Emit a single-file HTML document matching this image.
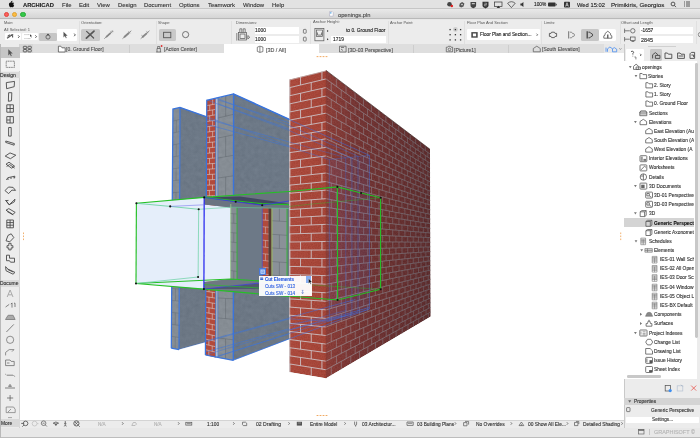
<!DOCTYPE html><html><head><meta charset="utf-8"><style>
*{margin:0;padding:0;box-sizing:border-box}
html,body{width:700px;height:438px;overflow:hidden;background:#fff;font-family:"Liberation Sans",sans-serif}
.t{position:absolute;white-space:nowrap;line-height:1.2;will-change:transform;-webkit-text-stroke:0.12px currentColor}
.b{position:absolute}
svg{position:absolute;left:0;top:0}
</style></head><body><div class="b" style="left:0.00px;top:0.00px;width:700.00px;height:438.00px;background:#e8e8e8"></div>
<div class="b" style="left:0.00px;top:436.60px;width:700.00px;height:1.40px;background:#bdbdbd"></div>
<div class="b" style="left:20.00px;top:53.00px;width:604.00px;height:366.50px;background:#ffffff"></div>
<div class="b" style="left:0.00px;top:0.00px;width:700.00px;height:9.40px;background:#e2e2e2;border-bottom:0.6px solid #c6c6c6"></div>
<div class="t" style="left:23.00px;top:1.70px;font-size:5.81px;color:#1a1a1a;font-weight:bold;-webkit-text-stroke:0.12px #1a1a1a;">ARCHICAD</div>
<div class="t" style="left:62.00px;top:1.61px;font-size:5.95px;color:#333;font-weight:normal;-webkit-text-stroke:0.12px #333;">File</div>
<div class="t" style="left:78.60px;top:1.61px;font-size:5.95px;color:#333;font-weight:normal;-webkit-text-stroke:0.12px #333;">Edit</div>
<div class="t" style="left:97.00px;top:1.61px;font-size:5.95px;color:#333;font-weight:normal;-webkit-text-stroke:0.12px #333;">View</div>
<div class="t" style="left:117.60px;top:1.61px;font-size:5.95px;color:#333;font-weight:normal;-webkit-text-stroke:0.12px #333;">Design</div>
<div class="t" style="left:143.80px;top:1.61px;font-size:5.95px;color:#333;font-weight:normal;-webkit-text-stroke:0.12px #333;">Document</div>
<div class="t" style="left:179.30px;top:1.61px;font-size:5.95px;color:#333;font-weight:normal;-webkit-text-stroke:0.12px #333;">Options</div>
<div class="t" style="left:208.00px;top:1.61px;font-size:5.95px;color:#333;font-weight:normal;-webkit-text-stroke:0.12px #333;">Teamwork</div>
<div class="t" style="left:243.00px;top:1.61px;font-size:5.95px;color:#333;font-weight:normal;-webkit-text-stroke:0.12px #333;">Window</div>
<div class="t" style="left:272.00px;top:1.61px;font-size:5.95px;color:#333;font-weight:normal;-webkit-text-stroke:0.12px #333;">Help</div>
<div class="t" style="left:533.60px;top:2.34px;font-size:4.77px;color:#222;font-weight:normal;-webkit-text-stroke:0.12px #222;">100%</div>
<div class="t" style="left:576.80px;top:1.70px;font-size:5.81px;color:#222;font-weight:normal;-webkit-text-stroke:0.12px #222;">Wed 15:02</div>
<div class="t" style="left:610.60px;top:1.48px;font-size:6.16px;color:#222;font-weight:normal;-webkit-text-stroke:0.12px #222;">Primikiris, Georgios</div>
<div class="b" style="left:0.00px;top:9.40px;width:700.00px;height:10.10px;background:linear-gradient(#e9e9e9,#d5d5d5);border-bottom:0.6px solid #b9b9b9"></div>
<div class="b" style="left:3.60px;top:11.60px;width:5.4px;height:5.4px;border-radius:50%;background:#fc605a;border:0.3px solid #e0443e"></div>
<div class="b" style="left:12.00px;top:11.60px;width:5.4px;height:5.4px;border-radius:50%;background:#fdbc40;border:0.3px solid #dea236"></div>
<div class="b" style="left:20.40px;top:11.60px;width:5.4px;height:5.4px;border-radius:50%;background:#34c84a;border:0.3px solid #27aa35"></div>
<div class="t" style="left:337.50px;top:11.65px;font-size:5.73px;color:#4a4a4a;font-weight:normal;-webkit-text-stroke:0.12px #4a4a4a;">openings.pln</div>
<div class="b" style="left:0.00px;top:19.50px;width:700.00px;height:24.90px;background:#ececec"></div>
<div class="b" style="left:79.30px;top:20.80px;width:0.60px;height:23.40px;background:#e0e0e0"></div>
<div class="b" style="left:156.20px;top:20.80px;width:0.60px;height:23.40px;background:#e0e0e0"></div>
<div class="b" style="left:231.00px;top:20.80px;width:0.60px;height:23.40px;background:#e0e0e0"></div>
<div class="b" style="left:309.80px;top:20.80px;width:0.60px;height:23.40px;background:#e0e0e0"></div>
<div class="b" style="left:387.80px;top:20.80px;width:0.60px;height:23.40px;background:#e0e0e0"></div>
<div class="b" style="left:464.20px;top:20.80px;width:0.60px;height:23.40px;background:#e0e0e0"></div>
<div class="b" style="left:541.00px;top:20.80px;width:0.60px;height:23.40px;background:#e0e0e0"></div>
<div class="b" style="left:620.20px;top:20.80px;width:0.60px;height:23.40px;background:#e0e0e0"></div>
<div class="b" style="left:695.90px;top:20.80px;width:0.60px;height:23.40px;background:#e0e0e0"></div>
<div class="t" style="left:4.30px;top:20.62px;font-size:3.84px;color:#555;font-weight:normal;-webkit-text-stroke:0.0px #555;">Main:</div>
<div class="t" style="left:4.30px;top:27.58px;font-size:4.07px;color:#5a5a5a;font-weight:normal;-webkit-text-stroke:0.0px #5a5a5a;">All Selected: 1</div>
<div class="t" style="left:81.40px;top:20.42px;font-size:4.16px;color:#555;font-weight:normal;-webkit-text-stroke:0.0px #555;">Orientation:</div>
<div class="t" style="left:158.40px;top:20.63px;font-size:3.82px;color:#555;font-weight:normal;-webkit-text-stroke:0.0px #555;">Shape:</div>
<div class="t" style="left:235.70px;top:20.61px;font-size:3.85px;color:#555;font-weight:normal;-webkit-text-stroke:0.0px #555;">Dimensions:</div>
<div class="t" style="left:312.60px;top:20.49px;font-size:4.05px;color:#555;font-weight:normal;-webkit-text-stroke:0.0px #555;">Anchor Height:</div>
<div class="t" style="left:390.00px;top:20.57px;font-size:3.91px;color:#555;font-weight:normal;-webkit-text-stroke:0.0px #555;">Anchor Point:</div>
<div class="t" style="left:467.00px;top:20.54px;font-size:3.97px;color:#555;font-weight:normal;-webkit-text-stroke:0.0px #555;">Floor Plan And Section:</div>
<div class="t" style="left:544.00px;top:20.55px;font-size:3.95px;color:#555;font-weight:normal;-webkit-text-stroke:0.0px #555;">Limits:</div>
<div class="t" style="left:621.00px;top:20.55px;font-size:3.96px;color:#555;font-weight:normal;-webkit-text-stroke:0.0px #555;">Offset and Length:</div>
<div class="b" style="left:5.10px;top:32.90px;width:15.50px;height:7.40px;background:#fff;border-radius:1px"></div>
<div class="b" style="left:22.30px;top:32.90px;width:16.00px;height:7.40px;background:#fff;border-radius:1px"></div>
<div class="b" style="left:39.40px;top:32.90px;width:17.20px;height:7.70px;background:#c6c6c6;border-radius:1.2px"></div>
<div class="b" style="left:57.10px;top:28.90px;width:20.00px;height:11.70px;background:#fff;border-radius:1px"></div>
<div class="b" style="left:81.40px;top:28.60px;width:18.30px;height:12.00px;background:#c9c9c9;border-radius:1.6px"></div>
<div class="b" style="left:158.70px;top:28.60px;width:17.70px;height:12.30px;background:#c9c9c9;border-radius:1.6px"></div>
<div class="b" style="left:254.60px;top:26.90px;width:44.50px;height:7.10px;background:#fff"></div>
<div class="b" style="left:254.60px;top:36.30px;width:44.50px;height:7.10px;background:#fff"></div>
<div class="t" style="left:255.40px;top:28.16px;font-size:4.90px;color:#222;font-weight:normal;-webkit-text-stroke:0.12px #222;">1000</div>
<div class="t" style="left:255.40px;top:36.96px;font-size:4.90px;color:#222;font-weight:normal;-webkit-text-stroke:0.12px #222;">1000</div>
<div class="t" style="left:346.30px;top:27.79px;font-size:4.86px;color:#222;font-weight:normal;-webkit-text-stroke:0.12px #222;">to 0. Ground Floor</div>
<div class="b" style="left:330.90px;top:35.70px;width:54.80px;height:7.70px;background:#fff"></div>
<div class="t" style="left:332.60px;top:36.86px;font-size:4.90px;color:#222;font-weight:normal;-webkit-text-stroke:0.12px #222;">1719</div>
<div class="b" style="left:467.40px;top:29.10px;width:72.40px;height:10.80px;background:#fff;border-radius:1px"></div>
<div class="t" style="left:479.80px;top:32.47px;font-size:4.72px;color:#222;font-weight:normal;-webkit-text-stroke:0.12px #222;">Floor Plan and Section...</div>
<div class="b" style="left:581.10px;top:28.60px;width:17.80px;height:12.30px;background:#c6c6c6;border-radius:1.6px"></div>
<div class="b" style="left:599.40px;top:28.60px;width:16.60px;height:12.30px;background:#fff;border-radius:1.6px"></div>
<div class="b" style="left:639.70px;top:27.30px;width:53.30px;height:6.70px;background:#fff"></div>
<div class="b" style="left:639.70px;top:35.70px;width:53.30px;height:7.00px;background:#fff"></div>
<div class="t" style="left:640.80px;top:28.32px;font-size:4.81px;color:#222;font-weight:normal;-webkit-text-stroke:0.12px #222;">-1657</div>
<div class="t" style="left:640.80px;top:36.56px;font-size:5.39px;color:#222;font-weight:normal;-webkit-text-stroke:0.12px #222;">2845</div>
<div class="b" style="left:20.00px;top:44.40px;width:583.50px;height:8.40px;background:#dedede"></div>
<div class="b" style="left:20.00px;top:44.40px;width:12.60px;height:8.40px;background:#d6d6d6"></div>
<div class="b" style="left:223.70px;top:44.40px;width:95.30px;height:8.80px;background:#ffffff"></div>
<div class="b" style="left:128.70px;top:45.00px;width:0.50px;height:7.60px;background:#cdcdcd"></div>
<div class="b" style="left:412.90px;top:45.00px;width:0.50px;height:7.60px;background:#cdcdcd"></div>
<div class="b" style="left:508.00px;top:45.00px;width:0.50px;height:7.60px;background:#cdcdcd"></div>
<div class="t" style="left:66.30px;top:47.11px;font-size:4.99px;color:#505050;font-weight:normal;-webkit-text-stroke:0.12px #505050;">[0. Ground Floor]</div>
<div class="t" style="left:164.30px;top:47.13px;font-size:4.96px;color:#505050;font-weight:normal;-webkit-text-stroke:0.12px #505050;">[Action Center]</div>
<div class="t" style="left:265.70px;top:46.87px;font-size:5.37px;color:#505050;font-weight:normal;-webkit-text-stroke:0.12px #505050;">[3D / All]</div>
<div class="t" style="left:347.70px;top:47.02px;font-size:5.12px;color:#505050;font-weight:normal;-webkit-text-stroke:0.12px #505050;">[3D-03 Perspective]</div>
<div class="t" style="left:454.00px;top:47.03px;font-size:5.11px;color:#505050;font-weight:normal;-webkit-text-stroke:0.12px #505050;">[Picture1]</div>
<div class="t" style="left:541.60px;top:47.11px;font-size:4.99px;color:#505050;font-weight:normal;-webkit-text-stroke:0.12px #505050;">[South Elevation]</div>
<div class="b" style="left:0.00px;top:44.40px;width:20.00px;height:383.20px;background:#ececec;border-right:0.6px solid #d2d2d2"></div>
<div class="b" style="left:0.00px;top:44.40px;width:1.00px;height:393.60px;background:#b9b9b9"></div>
<div class="b" style="left:1.00px;top:46.80px;width:18.70px;height:11.50px;background:#c6c6c6"></div>
<div class="b" style="left:1.00px;top:58.30px;width:18.70px;height:12.80px;background:#f2f2f2"></div>
<div class="b" style="left:1.00px;top:71.50px;width:18.70px;height:6.90px;background:#dadada"></div>
<div class="t" style="left:0.20px;top:72.41px;font-size:5.14px;color:#333;font-weight:normal;-webkit-text-stroke:0.12px #333;">Design</div>
<div class="b" style="left:1.00px;top:279.70px;width:18.70px;height:6.90px;background:#dadada"></div>
<div class="t" style="left:0.20px;top:280.84px;font-size:4.94px;color:#333;font-weight:normal;-webkit-text-stroke:0.12px #333;">Docume</div>
<div class="b" style="left:1.00px;top:418.90px;width:18.70px;height:8.50px;background:#d9d9d9"></div>
<div class="t" style="left:0.80px;top:420.85px;font-size:4.92px;color:#333;font-weight:normal;-webkit-text-stroke:0.12px #333;">More</div>
<div class="b" style="left:20.00px;top:419.50px;width:604.00px;height:8.10px;background:#ececec;border-top:0.5px solid #d4d4d4"></div>
<div class="t" style="left:98.30px;top:421.74px;font-size:4.62px;color:#b0b0b0;font-weight:normal;-webkit-text-stroke:0.12px #b0b0b0;">N/A</div>
<div class="t" style="left:154.30px;top:421.74px;font-size:4.62px;color:#b0b0b0;font-weight:normal;-webkit-text-stroke:0.12px #b0b0b0;">N/A</div>
<div class="t" style="left:206.90px;top:421.60px;font-size:4.84px;color:#333;font-weight:normal;-webkit-text-stroke:0.12px #333;">1:100</div>
<div class="t" style="left:256.00px;top:421.43px;font-size:5.11px;color:#333;font-weight:normal;-webkit-text-stroke:0.12px #333;">02 Drafting</div>
<div class="t" style="left:310.40px;top:421.57px;font-size:4.88px;color:#333;font-weight:normal;-webkit-text-stroke:0.12px #333;">Entire Model</div>
<div class="t" style="left:362.30px;top:421.57px;font-size:4.89px;color:#333;font-weight:normal;-webkit-text-stroke:0.12px #333;">03 Architectur...</div>
<div class="t" style="left:416.50px;top:421.62px;font-size:4.81px;color:#333;font-weight:normal;-webkit-text-stroke:0.12px #333;">03 Building Plans</div>
<div class="t" style="left:475.90px;top:421.57px;font-size:4.89px;color:#333;font-weight:normal;-webkit-text-stroke:0.12px #333;">No Overrides</div>
<div class="t" style="left:528.00px;top:421.57px;font-size:4.88px;color:#333;font-weight:normal;-webkit-text-stroke:0.12px #333;">00 Show All Ele...</div>
<div class="t" style="left:583.00px;top:421.59px;font-size:4.86px;color:#333;font-weight:normal;-webkit-text-stroke:0.12px #333;">Detailed Shading</div>
<div class="b" style="left:623.80px;top:44.40px;width:76.20px;height:383.20px;background:#ececec;border-left:0.6px solid #c9c9c9"></div>
<div class="b" style="left:648.00px;top:45.80px;width:28.40px;height:0.70px;background:#d0d0d0"></div>
<div class="b" style="left:625.70px;top:49.00px;width:17.90px;height:12.10px;background:#fff;border-radius:1px"></div>
<div class="b" style="left:650.00px;top:49.00px;width:12.10px;height:12.10px;background:#c7c7c7;border-radius:1.4px"></div>
<div class="b" style="left:624.40px;top:61.10px;width:73.00px;height:317.50px;background:#fff"></div>
<div class="b" style="left:695.40px;top:63.00px;width:2.80px;height:275.00px;background:#c8c8c8;border-radius:1.4px"></div>
<div class="b" style="left:626.50px;top:375.40px;width:34.50px;height:2.60px;background:#c8c8c8;border-radius:1.3px"></div>
<div class="b" style="left:624.40px;top:218.00px;width:69.60px;height:9.20px;background:#d4d4d4"></div>
<div class="t" style="left:642.3px;top:64.50px;font-size:4.85px;color:#333;font-weight:normal;width:51.7px;overflow:hidden">openings</div>
<div class="t" style="left:648.3px;top:73.60px;font-size:4.85px;color:#333;font-weight:normal;width:45.7px;overflow:hidden">Stories</div>
<div class="t" style="left:654.3px;top:82.80px;font-size:4.85px;color:#333;font-weight:normal;width:39.7px;overflow:hidden">2. Story</div>
<div class="t" style="left:654.3px;top:91.90px;font-size:4.85px;color:#333;font-weight:normal;width:39.7px;overflow:hidden">1. Story</div>
<div class="t" style="left:654.3px;top:101.10px;font-size:4.85px;color:#333;font-weight:normal;width:39.7px;overflow:hidden">0. Ground Floor</div>
<div class="t" style="left:648.6px;top:110.60px;font-size:4.85px;color:#333;font-weight:normal;width:45.4px;overflow:hidden">Sections</div>
<div class="t" style="left:648.6px;top:119.60px;font-size:4.85px;color:#333;font-weight:normal;width:45.4px;overflow:hidden">Elevations</div>
<div class="t" style="left:654.3px;top:128.60px;font-size:4.85px;color:#333;font-weight:normal;width:39.7px;overflow:hidden">East Elevation (Au</div>
<div class="t" style="left:654.3px;top:137.80px;font-size:4.85px;color:#333;font-weight:normal;width:39.7px;overflow:hidden">South Elevation (A</div>
<div class="t" style="left:654.3px;top:147.00px;font-size:4.85px;color:#333;font-weight:normal;width:39.7px;overflow:hidden">West Elevation (A</div>
<div class="t" style="left:648.6px;top:156.20px;font-size:4.85px;color:#333;font-weight:normal;width:45.4px;overflow:hidden">Interior Elevations</div>
<div class="t" style="left:648.6px;top:165.40px;font-size:4.85px;color:#333;font-weight:normal;width:45.4px;overflow:hidden">Worksheets</div>
<div class="t" style="left:648.6px;top:174.50px;font-size:4.85px;color:#333;font-weight:normal;width:45.4px;overflow:hidden">Details</div>
<div class="t" style="left:648.6px;top:183.60px;font-size:4.85px;color:#333;font-weight:normal;width:45.4px;overflow:hidden">3D Documents</div>
<div class="t" style="left:654.3px;top:192.60px;font-size:4.85px;color:#333;font-weight:normal;width:39.7px;overflow:hidden">3D-01 Perspective</div>
<div class="t" style="left:654.3px;top:201.80px;font-size:4.85px;color:#333;font-weight:normal;width:39.7px;overflow:hidden">3D-03 Perspective</div>
<div class="t" style="left:648.6px;top:210.90px;font-size:4.85px;color:#333;font-weight:normal;width:45.4px;overflow:hidden">3D</div>
<div class="t" style="left:654.3px;top:220.60px;font-size:4.85px;color:#111;font-weight:bold;width:39.7px;overflow:hidden">Generic Perspective</div>
<div class="t" style="left:654.3px;top:229.80px;font-size:4.85px;color:#333;font-weight:normal;width:39.7px;overflow:hidden">Generic Axonometry</div>
<div class="t" style="left:648.6px;top:238.80px;font-size:4.85px;color:#333;font-weight:normal;width:45.4px;overflow:hidden">Schedules</div>
<div class="t" style="left:654.3px;top:247.90px;font-size:4.85px;color:#333;font-weight:normal;width:39.7px;overflow:hidden">Elements</div>
<div class="t" style="left:660px;top:257.10px;font-size:4.85px;color:#333;font-weight:normal;width:34.0px;overflow:hidden">IES-01 Wall Schedule</div>
<div class="t" style="left:660px;top:266.20px;font-size:4.85px;color:#333;font-weight:normal;width:34.0px;overflow:hidden">IES-02 All Openings</div>
<div class="t" style="left:660px;top:275.40px;font-size:4.85px;color:#333;font-weight:normal;width:34.0px;overflow:hidden">IES-03 Door Schedule</div>
<div class="t" style="left:660px;top:284.90px;font-size:4.85px;color:#333;font-weight:normal;width:34.0px;overflow:hidden">IES-04 Window</div>
<div class="t" style="left:660px;top:293.90px;font-size:4.85px;color:#333;font-weight:normal;width:34.0px;overflow:hidden">IES-05 Object List</div>
<div class="t" style="left:660px;top:302.90px;font-size:4.85px;color:#333;font-weight:normal;width:34.0px;overflow:hidden">IES-BX Default</div>
<div class="t" style="left:654.3px;top:311.80px;font-size:4.85px;color:#333;font-weight:normal;width:39.7px;overflow:hidden">Components</div>
<div class="t" style="left:654.3px;top:320.90px;font-size:4.85px;color:#333;font-weight:normal;width:39.7px;overflow:hidden">Surfaces</div>
<div class="t" style="left:648.6px;top:330.50px;font-size:4.85px;color:#333;font-weight:normal;width:45.4px;overflow:hidden">Project Indexes</div>
<div class="t" style="left:654.3px;top:339.60px;font-size:4.85px;color:#333;font-weight:normal;width:39.7px;overflow:hidden">Change List</div>
<div class="t" style="left:654.3px;top:348.80px;font-size:4.85px;color:#333;font-weight:normal;width:39.7px;overflow:hidden">Drawing List</div>
<div class="t" style="left:654.3px;top:357.90px;font-size:4.85px;color:#333;font-weight:normal;width:39.7px;overflow:hidden">Issue History</div>
<div class="t" style="left:654.3px;top:367.00px;font-size:4.85px;color:#333;font-weight:normal;width:39.7px;overflow:hidden">Sheet Index</div>
<div class="b" style="left:624.40px;top:398.00px;width:75.60px;height:6.70px;background:#d4d4d4"></div>
<div class="t" style="left:634.30px;top:398.59px;font-size:4.85px;color:#333;font-weight:normal;-webkit-text-stroke:0.12px #333;">Properties</div>
<div class="t" style="left:650.70px;top:407.83px;font-size:4.80px;color:#333;font-weight:normal;-webkit-text-stroke:0.12px #333;">Generic Perspective</div>
<div class="b" style="left:626.40px;top:416.60px;width:72.50px;height:6.10px;background:#fff;border-radius:0.8px"></div>
<div class="t" style="left:651.80px;top:417.24px;font-size:4.77px;color:#333;font-weight:normal;-webkit-text-stroke:0.12px #333;">Settings...</div>
<div class="t" style="left:654.30px;top:429.20px;font-size:5.48px;color:#b4b4b4;font-weight:normal;-webkit-text-stroke:0.12px #b4b4b4;">GRAPHISOFT ©</div>
<div class="b" style="left:649.20px;top:429.00px;width:0.60px;height:6.00px;background:#c4c4c4"></div>
<svg width="700" height="438" style="z-index:2"><defs><linearGradient id="gside" x1="326" y1="0" x2="430" y2="0" gradientUnits="userSpaceOnUse"><stop offset="0" stop-color="#8c3e38"/><stop offset="0.3" stop-color="#743534"/><stop offset="1" stop-color="#5c2d2e"/></linearGradient><linearGradient id="gfront" x1="289" y1="0" x2="326" y2="0" gradientUnits="userSpaceOnUse"><stop offset="0" stop-color="#ab4a3d"/><stop offset="1" stop-color="#a44538"/></linearGradient><linearGradient id="gconc" x1="0" y1="90" x2="0" y2="360" gradientUnits="userSpaceOnUse"><stop offset="0" stop-color="#6d7987"/><stop offset="1" stop-color="#6c7784"/></linearGradient><linearGradient id="gmort" x1="326" y1="0" x2="430" y2="0" gradientUnits="userSpaceOnUse"><stop offset="0" stop-color="#a0949a"/><stop offset="1" stop-color="#6c656c"/></linearGradient><filter id="nz" primitiveUnits="userSpaceOnUse" color-interpolation-filters="sRGB"><feTurbulence type="fractalNoise" baseFrequency="0.22" numOctaves="3" seed="4" result="n"/><feColorMatrix in="n" type="matrix" values="0.33 0.33 0.33 0 0  0.33 0.33 0.33 0 0  0.33 0.33 0.33 0 0  0 0 0 0 1" result="g"/><feComposite in="SourceGraphic" in2="g" operator="arithmetic" k1="0" k2="1" k3="0.09" k4="-0.045" result="c"/><feComposite in="c" in2="SourceAlpha" operator="in"/></filter><filter id="nzb" primitiveUnits="userSpaceOnUse" color-interpolation-filters="sRGB"><feTurbulence type="fractalNoise" baseFrequency="0.7" numOctaves="2" seed="9" result="n"/><feColorMatrix in="n" type="matrix" values="0.33 0.33 0.33 0 0  0.33 0.33 0.33 0 0  0.33 0.33 0.33 0 0  0 0 0 0 1" result="g"/><feComposite in="SourceGraphic" in2="g" operator="arithmetic" k1="0" k2="1" k3="0.14" k4="-0.07" result="c"/><feComposite in="c" in2="SourceAlpha" operator="in"/></filter></defs><polygon points="180.00,107.30 290.00,146.00 290.00,318.90 179.00,349.60" fill="url(#gconc)" filter="url(#nz)"/><polygon points="172.90,109.10 180.00,107.30 179.00,349.60 171.30,348.20" fill="#868d94" filter="url(#nz)"/><line x1="172.82" y1="121.05" x2="179.95" y2="119.41" stroke="#60676e" stroke-width="0.4" /><line x1="172.74" y1="133.01" x2="179.90" y2="131.53" stroke="#60676e" stroke-width="0.4" /><line x1="172.66" y1="144.96" x2="179.85" y2="143.64" stroke="#60676e" stroke-width="0.4" /><line x1="172.58" y1="156.92" x2="179.80" y2="155.76" stroke="#60676e" stroke-width="0.4" /><line x1="172.50" y1="168.88" x2="179.75" y2="167.88" stroke="#60676e" stroke-width="0.4" /><line x1="172.42" y1="180.83" x2="179.70" y2="179.99" stroke="#60676e" stroke-width="0.4" /><line x1="172.34" y1="192.78" x2="179.65" y2="192.10" stroke="#60676e" stroke-width="0.4" /><line x1="172.26" y1="204.74" x2="179.60" y2="204.22" stroke="#60676e" stroke-width="0.4" /><line x1="172.18" y1="216.69" x2="179.55" y2="216.34" stroke="#60676e" stroke-width="0.4" /><line x1="172.10" y1="228.65" x2="179.50" y2="228.45" stroke="#60676e" stroke-width="0.4" /><line x1="172.02" y1="240.60" x2="179.45" y2="240.56" stroke="#60676e" stroke-width="0.4" /><line x1="171.94" y1="252.56" x2="179.40" y2="252.68" stroke="#60676e" stroke-width="0.4" /><line x1="171.86" y1="264.51" x2="179.35" y2="264.80" stroke="#60676e" stroke-width="0.4" /><line x1="171.78" y1="276.47" x2="179.30" y2="276.91" stroke="#60676e" stroke-width="0.4" /><line x1="171.70" y1="288.42" x2="179.25" y2="289.03" stroke="#60676e" stroke-width="0.4" /><line x1="171.62" y1="300.38" x2="179.20" y2="301.14" stroke="#60676e" stroke-width="0.4" /><line x1="171.54" y1="312.33" x2="179.15" y2="313.25" stroke="#60676e" stroke-width="0.4" /><line x1="171.46" y1="324.29" x2="179.10" y2="325.37" stroke="#60676e" stroke-width="0.4" /><line x1="171.38" y1="336.25" x2="179.05" y2="337.49" stroke="#60676e" stroke-width="0.4" /><line x1="176.38" y1="120.23" x2="176.32" y2="132.27" stroke="#60676e" stroke-width="0.4" /><line x1="176.25" y1="144.30" x2="176.19" y2="156.34" stroke="#60676e" stroke-width="0.4" /><line x1="176.12" y1="168.38" x2="176.06" y2="180.41" stroke="#60676e" stroke-width="0.4" /><line x1="176.00" y1="192.44" x2="175.93" y2="204.48" stroke="#60676e" stroke-width="0.4" /><line x1="175.87" y1="216.51" x2="175.80" y2="228.55" stroke="#60676e" stroke-width="0.4" /><line x1="175.73" y1="240.58" x2="175.67" y2="252.62" stroke="#60676e" stroke-width="0.4" /><line x1="175.60" y1="264.65" x2="175.54" y2="276.69" stroke="#60676e" stroke-width="0.4" /><line x1="175.47" y1="288.72" x2="175.41" y2="300.76" stroke="#60676e" stroke-width="0.4" /><line x1="175.34" y1="312.79" x2="175.28" y2="324.83" stroke="#60676e" stroke-width="0.4" /><line x1="175.22" y1="336.87" x2="175.15" y2="348.90" stroke="#60676e" stroke-width="0.4" /><polyline points="171.30,348.20 172.90,109.10 180.00,107.30 290.00,146.00" fill="none" stroke="#3a74dc" stroke-width="1.25" /><polyline points="171.30,348.20 179.00,349.60 179.00,349.60" fill="none" stroke="#3a74dc" stroke-width="1.25" /><line x1="180.00" y1="107.30" x2="179.00" y2="349.60" stroke="#3a74dc" stroke-width="1.2" /><polygon points="233.60,93.80 290.00,119.60 290.00,338.80 233.30,360.30" fill="url(#gconc)" filter="url(#nz)"/><polygon points="206.80,100.30 215.60,98.60 215.60,357.50 205.40,355.00" fill="#b24a3c" /><polygon points="215.60,98.60 216.20,98.50 216.20,357.60 215.60,357.50" fill="#7a848e" /><line x1="206.77" y1="105.61" x2="215.60" y2="103.99" stroke="#d8cfcc" stroke-width="0.6" /><line x1="206.74" y1="110.91" x2="215.60" y2="109.39" stroke="#d8cfcc" stroke-width="0.6" /><line x1="206.71" y1="116.22" x2="215.60" y2="114.78" stroke="#d8cfcc" stroke-width="0.6" /><line x1="206.68" y1="121.52" x2="215.60" y2="120.17" stroke="#d8cfcc" stroke-width="0.6" /><line x1="206.65" y1="126.83" x2="215.60" y2="125.57" stroke="#d8cfcc" stroke-width="0.6" /><line x1="206.62" y1="132.14" x2="215.60" y2="130.96" stroke="#d8cfcc" stroke-width="0.6" /><line x1="206.60" y1="137.44" x2="215.60" y2="136.36" stroke="#d8cfcc" stroke-width="0.6" /><line x1="206.57" y1="142.75" x2="215.60" y2="141.75" stroke="#d8cfcc" stroke-width="0.6" /><line x1="206.54" y1="148.06" x2="215.60" y2="147.14" stroke="#d8cfcc" stroke-width="0.6" /><line x1="206.51" y1="153.36" x2="215.60" y2="152.54" stroke="#d8cfcc" stroke-width="0.6" /><line x1="206.48" y1="158.67" x2="215.60" y2="157.93" stroke="#d8cfcc" stroke-width="0.6" /><line x1="206.45" y1="163.97" x2="215.60" y2="163.32" stroke="#d8cfcc" stroke-width="0.6" /><line x1="206.42" y1="169.28" x2="215.60" y2="168.72" stroke="#d8cfcc" stroke-width="0.6" /><line x1="206.39" y1="174.59" x2="215.60" y2="174.11" stroke="#d8cfcc" stroke-width="0.6" /><line x1="206.36" y1="179.89" x2="215.60" y2="179.51" stroke="#d8cfcc" stroke-width="0.6" /><line x1="206.33" y1="185.20" x2="215.60" y2="184.90" stroke="#d8cfcc" stroke-width="0.6" /><line x1="206.30" y1="190.51" x2="215.60" y2="190.29" stroke="#d8cfcc" stroke-width="0.6" /><line x1="206.28" y1="195.81" x2="215.60" y2="195.69" stroke="#d8cfcc" stroke-width="0.6" /><line x1="206.25" y1="201.12" x2="215.60" y2="201.08" stroke="#d8cfcc" stroke-width="0.6" /><line x1="206.22" y1="206.43" x2="215.60" y2="206.47" stroke="#d8cfcc" stroke-width="0.6" /><line x1="206.19" y1="211.73" x2="215.60" y2="211.87" stroke="#d8cfcc" stroke-width="0.6" /><line x1="206.16" y1="217.04" x2="215.60" y2="217.26" stroke="#d8cfcc" stroke-width="0.6" /><line x1="206.13" y1="222.34" x2="215.60" y2="222.66" stroke="#d8cfcc" stroke-width="0.6" /><line x1="206.10" y1="227.65" x2="215.60" y2="228.05" stroke="#d8cfcc" stroke-width="0.6" /><line x1="206.07" y1="232.96" x2="215.60" y2="233.44" stroke="#d8cfcc" stroke-width="0.6" /><line x1="206.04" y1="238.26" x2="215.60" y2="238.84" stroke="#d8cfcc" stroke-width="0.6" /><line x1="206.01" y1="243.57" x2="215.60" y2="244.23" stroke="#d8cfcc" stroke-width="0.6" /><line x1="205.98" y1="248.88" x2="215.60" y2="249.62" stroke="#d8cfcc" stroke-width="0.6" /><line x1="205.95" y1="254.18" x2="215.60" y2="255.02" stroke="#d8cfcc" stroke-width="0.6" /><line x1="205.93" y1="259.49" x2="215.60" y2="260.41" stroke="#d8cfcc" stroke-width="0.6" /><line x1="205.90" y1="264.79" x2="215.60" y2="265.81" stroke="#d8cfcc" stroke-width="0.6" /><line x1="205.87" y1="270.10" x2="215.60" y2="271.20" stroke="#d8cfcc" stroke-width="0.6" /><line x1="205.84" y1="275.41" x2="215.60" y2="276.59" stroke="#d8cfcc" stroke-width="0.6" /><line x1="205.81" y1="280.71" x2="215.60" y2="281.99" stroke="#d8cfcc" stroke-width="0.6" /><line x1="205.78" y1="286.02" x2="215.60" y2="287.38" stroke="#d8cfcc" stroke-width="0.6" /><line x1="205.75" y1="291.32" x2="215.60" y2="292.77" stroke="#d8cfcc" stroke-width="0.6" /><line x1="205.72" y1="296.63" x2="215.60" y2="298.17" stroke="#d8cfcc" stroke-width="0.6" /><line x1="205.69" y1="301.94" x2="215.60" y2="303.56" stroke="#d8cfcc" stroke-width="0.6" /><line x1="205.66" y1="307.24" x2="215.60" y2="308.96" stroke="#d8cfcc" stroke-width="0.6" /><line x1="205.63" y1="312.55" x2="215.60" y2="314.35" stroke="#d8cfcc" stroke-width="0.6" /><line x1="205.60" y1="317.86" x2="215.60" y2="319.74" stroke="#d8cfcc" stroke-width="0.6" /><line x1="205.58" y1="323.16" x2="215.60" y2="325.14" stroke="#d8cfcc" stroke-width="0.6" /><line x1="205.55" y1="328.47" x2="215.60" y2="330.53" stroke="#d8cfcc" stroke-width="0.6" /><line x1="205.52" y1="333.77" x2="215.60" y2="335.92" stroke="#d8cfcc" stroke-width="0.6" /><line x1="205.49" y1="339.08" x2="215.60" y2="341.32" stroke="#d8cfcc" stroke-width="0.6" /><line x1="205.46" y1="344.39" x2="215.60" y2="346.71" stroke="#d8cfcc" stroke-width="0.6" /><line x1="205.43" y1="349.69" x2="215.60" y2="352.11" stroke="#d8cfcc" stroke-width="0.6" /><line x1="212.67" y1="99.17" x2="212.66" y2="104.53" stroke="#d8cfcc" stroke-width="0.6" /><line x1="209.71" y1="105.07" x2="209.69" y2="110.40" stroke="#d8cfcc" stroke-width="0.6" /><line x1="212.65" y1="109.90" x2="212.64" y2="115.26" stroke="#d8cfcc" stroke-width="0.6" /><line x1="209.68" y1="115.74" x2="209.66" y2="121.07" stroke="#d8cfcc" stroke-width="0.6" /><line x1="212.63" y1="120.62" x2="212.62" y2="125.99" stroke="#d8cfcc" stroke-width="0.6" /><line x1="209.64" y1="126.41" x2="209.62" y2="131.75" stroke="#d8cfcc" stroke-width="0.6" /><line x1="212.61" y1="131.35" x2="212.60" y2="136.72" stroke="#d8cfcc" stroke-width="0.6" /><line x1="209.60" y1="137.08" x2="209.58" y2="142.42" stroke="#d8cfcc" stroke-width="0.6" /><line x1="212.59" y1="142.08" x2="212.58" y2="147.45" stroke="#d8cfcc" stroke-width="0.6" /><line x1="209.56" y1="147.75" x2="209.54" y2="153.09" stroke="#d8cfcc" stroke-width="0.6" /><line x1="212.57" y1="152.81" x2="212.56" y2="158.18" stroke="#d8cfcc" stroke-width="0.6" /><line x1="209.52" y1="158.42" x2="209.50" y2="163.76" stroke="#d8cfcc" stroke-width="0.6" /><line x1="212.55" y1="163.54" x2="212.54" y2="168.91" stroke="#d8cfcc" stroke-width="0.6" /><line x1="209.48" y1="169.09" x2="209.46" y2="174.43" stroke="#d8cfcc" stroke-width="0.6" /><line x1="212.53" y1="174.27" x2="212.52" y2="179.64" stroke="#d8cfcc" stroke-width="0.6" /><line x1="209.44" y1="179.76" x2="209.42" y2="185.10" stroke="#d8cfcc" stroke-width="0.6" /><line x1="212.51" y1="185.00" x2="212.50" y2="190.36" stroke="#d8cfcc" stroke-width="0.6" /><line x1="209.40" y1="190.44" x2="209.38" y2="195.77" stroke="#d8cfcc" stroke-width="0.6" /><line x1="212.49" y1="195.73" x2="212.48" y2="201.09" stroke="#d8cfcc" stroke-width="0.6" /><line x1="209.36" y1="201.11" x2="209.34" y2="206.44" stroke="#d8cfcc" stroke-width="0.6" /><line x1="212.47" y1="206.46" x2="212.46" y2="211.82" stroke="#d8cfcc" stroke-width="0.6" /><line x1="209.33" y1="211.78" x2="209.31" y2="217.11" stroke="#d8cfcc" stroke-width="0.6" /><line x1="212.45" y1="217.19" x2="212.44" y2="222.55" stroke="#d8cfcc" stroke-width="0.6" /><line x1="209.29" y1="222.45" x2="209.27" y2="227.78" stroke="#d8cfcc" stroke-width="0.6" /><line x1="212.43" y1="227.92" x2="212.42" y2="233.28" stroke="#d8cfcc" stroke-width="0.6" /><line x1="209.25" y1="233.12" x2="209.23" y2="238.45" stroke="#d8cfcc" stroke-width="0.6" /><line x1="212.41" y1="238.65" x2="212.40" y2="244.01" stroke="#d8cfcc" stroke-width="0.6" /><line x1="209.21" y1="243.79" x2="209.19" y2="249.12" stroke="#d8cfcc" stroke-width="0.6" /><line x1="212.39" y1="249.38" x2="212.38" y2="254.74" stroke="#d8cfcc" stroke-width="0.6" /><line x1="209.17" y1="254.46" x2="209.15" y2="259.80" stroke="#d8cfcc" stroke-width="0.6" /><line x1="212.38" y1="260.10" x2="212.37" y2="265.47" stroke="#d8cfcc" stroke-width="0.6" /><line x1="209.13" y1="265.13" x2="209.11" y2="270.47" stroke="#d8cfcc" stroke-width="0.6" /><line x1="212.36" y1="270.83" x2="212.35" y2="276.20" stroke="#d8cfcc" stroke-width="0.6" /><line x1="209.09" y1="275.80" x2="209.07" y2="281.14" stroke="#d8cfcc" stroke-width="0.6" /><line x1="212.34" y1="281.56" x2="212.33" y2="286.93" stroke="#d8cfcc" stroke-width="0.6" /><line x1="209.05" y1="286.47" x2="209.03" y2="291.81" stroke="#d8cfcc" stroke-width="0.6" /><line x1="212.32" y1="292.29" x2="212.31" y2="297.66" stroke="#d8cfcc" stroke-width="0.6" /><line x1="209.01" y1="297.14" x2="208.99" y2="302.48" stroke="#d8cfcc" stroke-width="0.6" /><line x1="212.30" y1="303.02" x2="212.29" y2="308.39" stroke="#d8cfcc" stroke-width="0.6" /><line x1="208.98" y1="307.81" x2="208.96" y2="313.15" stroke="#d8cfcc" stroke-width="0.6" /><line x1="212.28" y1="313.75" x2="212.27" y2="319.11" stroke="#d8cfcc" stroke-width="0.6" /><line x1="208.94" y1="318.49" x2="208.92" y2="323.82" stroke="#d8cfcc" stroke-width="0.6" /><line x1="212.26" y1="324.48" x2="212.25" y2="329.84" stroke="#d8cfcc" stroke-width="0.6" /><line x1="208.90" y1="329.16" x2="208.88" y2="334.49" stroke="#d8cfcc" stroke-width="0.6" /><line x1="212.24" y1="335.21" x2="212.23" y2="340.57" stroke="#d8cfcc" stroke-width="0.6" /><line x1="208.86" y1="339.83" x2="208.84" y2="345.16" stroke="#d8cfcc" stroke-width="0.6" /><line x1="212.22" y1="345.94" x2="212.21" y2="351.30" stroke="#d8cfcc" stroke-width="0.6" /><line x1="208.82" y1="350.50" x2="208.80" y2="355.83" stroke="#d8cfcc" stroke-width="0.6" /><polygon points="216.20,98.50 217.80,98.10 217.80,357.90 216.20,357.60" fill="#b8bcc2" /><polygon points="217.80,98.10 233.60,93.80 233.30,360.30 217.80,357.90" fill="#868d94" filter="url(#nz)"/><line x1="217.80" y1="118.08" x2="233.58" y2="114.30" stroke="#5c636a" stroke-width="0.45" /><line x1="217.80" y1="138.07" x2="233.55" y2="134.80" stroke="#5c636a" stroke-width="0.45" /><line x1="217.80" y1="158.05" x2="233.53" y2="155.30" stroke="#5c636a" stroke-width="0.45" /><line x1="217.80" y1="178.04" x2="233.51" y2="175.80" stroke="#5c636a" stroke-width="0.45" /><line x1="217.80" y1="198.02" x2="233.48" y2="196.30" stroke="#5c636a" stroke-width="0.45" /><line x1="217.80" y1="218.01" x2="233.46" y2="216.80" stroke="#5c636a" stroke-width="0.45" /><line x1="217.80" y1="237.99" x2="233.44" y2="237.30" stroke="#5c636a" stroke-width="0.45" /><line x1="217.80" y1="257.98" x2="233.42" y2="257.80" stroke="#5c636a" stroke-width="0.45" /><line x1="217.80" y1="277.96" x2="233.39" y2="278.30" stroke="#5c636a" stroke-width="0.45" /><line x1="217.80" y1="297.95" x2="233.37" y2="298.80" stroke="#5c636a" stroke-width="0.45" /><line x1="217.80" y1="317.93" x2="233.35" y2="319.30" stroke="#5c636a" stroke-width="0.45" /><line x1="217.80" y1="337.92" x2="233.32" y2="339.80" stroke="#5c636a" stroke-width="0.45" /><line x1="225.70" y1="95.95" x2="225.69" y2="116.19" stroke="#5c636a" stroke-width="0.45" /><line x1="225.68" y1="136.43" x2="225.67" y2="156.68" stroke="#5c636a" stroke-width="0.45" /><line x1="225.65" y1="176.92" x2="225.64" y2="197.16" stroke="#5c636a" stroke-width="0.45" /><line x1="225.63" y1="217.40" x2="225.62" y2="237.65" stroke="#5c636a" stroke-width="0.45" /><line x1="225.61" y1="257.89" x2="225.60" y2="278.13" stroke="#5c636a" stroke-width="0.45" /><line x1="225.58" y1="298.37" x2="225.57" y2="318.62" stroke="#5c636a" stroke-width="0.45" /><line x1="225.56" y1="338.86" x2="225.55" y2="359.10" stroke="#5c636a" stroke-width="0.45" /><polyline points="205.40,355.00 206.80,100.30 233.60,93.80 290.00,119.60" fill="none" stroke="#3a74dc" stroke-width="1.25" /><polyline points="205.40,355.00 233.30,360.30 233.30,360.30" fill="none" stroke="#3a74dc" stroke-width="1.25" /><line x1="233.60" y1="93.80" x2="233.30" y2="360.30" stroke="#3a74dc" stroke-width="1.4" /><line x1="215.60" y1="98.60" x2="215.60" y2="357.50" stroke="#3a74dc" stroke-width="0.6" /><line x1="217.80" y1="98.10" x2="217.80" y2="357.90" stroke="#3a74dc" stroke-width="0.6" /><line x1="218.40" y1="100.00" x2="290.00" y2="123.00" stroke="#3a74dc" stroke-width="0.6" opacity="0.85"/><line x1="218.40" y1="104.00" x2="290.00" y2="129.20" stroke="#3a74dc" stroke-width="0.6" opacity="0.85"/><line x1="205.40" y1="118.60" x2="290.00" y2="142.20" stroke="#3a74dc" stroke-width="0.6" opacity="0.85"/><line x1="205.40" y1="124.00" x2="290.00" y2="147.00" stroke="#3a74dc" stroke-width="0.6" opacity="0.85"/><line x1="205.70" y1="341.00" x2="290.00" y2="318.00" stroke="#3a74dc" stroke-width="0.6" opacity="0.85"/><line x1="205.40" y1="352.00" x2="290.00" y2="328.50" stroke="#3a74dc" stroke-width="0.6" opacity="0.85"/><line x1="218.40" y1="356.00" x2="290.00" y2="333.50" stroke="#3a74dc" stroke-width="0.6" opacity="0.85"/><polygon points="136.40,203.30 204.20,197.40 204.20,204.50 231.00,207.50 230.60,279.00 204.00,282.00 203.90,289.10 136.00,283.50" fill="#e5eefa" /><polygon points="230.50,204.00 237.00,204.44 237.00,281.11 230.50,280.00" fill="#868d94" /><polygon points="237.00,204.44 262.30,206.17 262.30,285.44 237.00,281.11" fill="#6d7987" /><polygon points="262.30,206.17 268.60,206.61 268.60,286.51 262.30,285.44" fill="#b04a3c" /><polygon points="268.60,206.61 271.60,206.81 271.60,287.03 268.60,286.51" fill="#5a3a34" /><polygon points="271.60,206.81 287.20,207.88 287.20,289.69 271.60,287.03" fill="#8a9198" /><polygon points="287.20,207.88 289.20,208.01 289.20,290.03 287.20,289.69" fill="#6d7987" /><line x1="262.30" y1="213.22" x2="268.60" y2="213.68" stroke="#d0c8c8" stroke-width="0.5" /><line x1="262.30" y1="219.95" x2="268.60" y2="220.45" stroke="#d0c8c8" stroke-width="0.5" /><line x1="262.30" y1="226.68" x2="268.60" y2="227.22" stroke="#d0c8c8" stroke-width="0.5" /><line x1="262.30" y1="233.40" x2="268.60" y2="234.00" stroke="#d0c8c8" stroke-width="0.5" /><line x1="262.30" y1="240.12" x2="268.60" y2="240.78" stroke="#d0c8c8" stroke-width="0.5" /><line x1="262.30" y1="246.85" x2="268.60" y2="247.55" stroke="#d0c8c8" stroke-width="0.5" /><line x1="262.30" y1="253.57" x2="268.60" y2="254.32" stroke="#d0c8c8" stroke-width="0.5" /><line x1="262.30" y1="260.30" x2="268.60" y2="261.10" stroke="#d0c8c8" stroke-width="0.5" /><line x1="262.30" y1="267.02" x2="268.60" y2="267.88" stroke="#d0c8c8" stroke-width="0.5" /><line x1="262.30" y1="273.75" x2="268.60" y2="274.65" stroke="#d0c8c8" stroke-width="0.5" /><line x1="262.30" y1="280.47" x2="268.60" y2="281.42" stroke="#d0c8c8" stroke-width="0.5" /><line x1="265.45" y1="213.45" x2="265.45" y2="220.20" stroke="#d0c8c8" stroke-width="0.5" /><line x1="265.45" y1="226.95" x2="265.45" y2="233.70" stroke="#d0c8c8" stroke-width="0.5" /><line x1="265.45" y1="240.45" x2="265.45" y2="247.20" stroke="#d0c8c8" stroke-width="0.5" /><line x1="265.45" y1="253.95" x2="265.45" y2="260.70" stroke="#d0c8c8" stroke-width="0.5" /><line x1="265.45" y1="267.45" x2="265.45" y2="274.20" stroke="#d0c8c8" stroke-width="0.5" /><line x1="265.45" y1="280.95" x2="265.45" y2="287.70" stroke="#d0c8c8" stroke-width="0.5" /><line x1="271.60" y1="220.70" x2="287.20" y2="221.67" stroke="#60676e" stroke-width="0.5" /><line x1="271.60" y1="234.30" x2="287.20" y2="235.33" stroke="#60676e" stroke-width="0.5" /><line x1="271.60" y1="247.90" x2="287.20" y2="249.00" stroke="#60676e" stroke-width="0.5" /><line x1="271.60" y1="261.50" x2="287.20" y2="262.67" stroke="#60676e" stroke-width="0.5" /><line x1="271.60" y1="275.10" x2="287.20" y2="276.33" stroke="#60676e" stroke-width="0.5" /><line x1="279.40" y1="207.55" x2="279.40" y2="221.18" stroke="#60676e" stroke-width="0.5" /><line x1="279.40" y1="234.82" x2="279.40" y2="248.45" stroke="#60676e" stroke-width="0.5" /><line x1="279.40" y1="262.08" x2="279.40" y2="275.72" stroke="#60676e" stroke-width="0.5" /><line x1="230.50" y1="213.50" x2="237.00" y2="213.97" stroke="#60676e" stroke-width="0.45" /><line x1="230.50" y1="223.00" x2="237.00" y2="223.55" stroke="#60676e" stroke-width="0.45" /><line x1="230.50" y1="232.50" x2="237.00" y2="233.12" stroke="#60676e" stroke-width="0.45" /><line x1="230.50" y1="242.00" x2="237.00" y2="242.70" stroke="#60676e" stroke-width="0.45" /><line x1="230.50" y1="251.50" x2="237.00" y2="252.28" stroke="#60676e" stroke-width="0.45" /><line x1="230.50" y1="261.00" x2="237.00" y2="261.85" stroke="#60676e" stroke-width="0.45" /><line x1="230.50" y1="270.50" x2="237.00" y2="271.43" stroke="#60676e" stroke-width="0.45" /><line x1="233.75" y1="213.74" x2="233.75" y2="223.27" stroke="#60676e" stroke-width="0.45" /><line x1="233.75" y1="232.81" x2="233.75" y2="242.35" stroke="#60676e" stroke-width="0.45" /><line x1="233.75" y1="251.89" x2="233.75" y2="261.43" stroke="#60676e" stroke-width="0.45" /><line x1="233.75" y1="270.96" x2="233.75" y2="280.50" stroke="#60676e" stroke-width="0.45" /><line x1="237.00" y1="204.00" x2="237.00" y2="290.00" stroke="#26c026" stroke-width="0.8" /><line x1="287.00" y1="204.00" x2="287.00" y2="290.00" stroke="#26c026" stroke-width="0.8" /><line x1="272.00" y1="204.00" x2="272.00" y2="290.00" stroke="#a8c840" stroke-width="0.7" /><line x1="262.30" y1="205.00" x2="262.30" y2="290.00" stroke="#4b50d0" stroke-width="0.7" /><polygon points="204.20,197.40 289.00,191.50 289.00,208.50 231.00,207.50 204.20,204.50" fill="#6b7480" /><polygon points="204.20,197.40 240.00,196.50 289.00,203.50 262.20,205.20 235.70,201.80" fill="#3a3f5c" opacity="0.85"/><polygon points="204.00,282.00 230.60,279.00 289.00,283.00 289.00,296.50 203.90,289.10" fill="#6f7882" /><polygon points="203.90,289.10 258.00,283.50 289.00,286.50 289.00,290.00 250.00,289.00" fill="#3d4560" opacity="0.6"/><polyline points="136.40,203.30 204.20,197.40 289.00,191.50" fill="none" stroke="#26c026" stroke-width="1.15" /><polyline points="136.40,203.30 170.20,206.40 198.70,209.30" fill="none" stroke="#5fd09a" stroke-width="0.8" /><polyline points="198.70,209.30 231.00,207.20 289.00,208.50" fill="none" stroke="#5fd09a" stroke-width="0.6" /><polyline points="204.20,197.40 262.00,203.60 289.00,204.60" fill="none" stroke="#26c026" stroke-width="1.15" /><line x1="136.40" y1="203.30" x2="136.00" y2="283.50" stroke="#26c026" stroke-width="1.15" /><line x1="198.70" y1="209.30" x2="198.10" y2="277.00" stroke="#66d0a0" stroke-width="0.7" /><line x1="230.80" y1="204.00" x2="230.60" y2="279.00" stroke="#9cd68c" stroke-width="0.7" /><polyline points="136.00,283.50 230.60,279.00 289.00,283.00" fill="none" stroke="#26c026" stroke-width="1.15" /><polyline points="136.00,283.50 203.90,289.10 289.00,296.50" fill="none" stroke="#26c026" stroke-width="1.15" /><polyline points="136.00,283.50 198.10,277.00" fill="none" stroke="#66d0a0" stroke-width="0.7" /><line x1="204.20" y1="197.40" x2="203.90" y2="289.10" stroke="#2f2ff0" stroke-width="1.3" /><polyline points="204.20,197.40 235.70,201.80 262.20,205.20 289.00,201.00" fill="none" stroke="#3a3ae8" stroke-width="0.8" /><polyline points="170.20,206.40 204.20,204.80" fill="none" stroke="#7a7af0" stroke-width="0.6" /><polyline points="203.90,289.10 258.00,283.20 289.00,286.50" fill="none" stroke="#3a3ae8" stroke-width="0.7" /><polyline points="204.00,284.60 289.00,289.80" fill="none" stroke="#26c026" stroke-width="0.7" /><polygon points="289.20,79.60 326.00,70.40 326.00,378.30 289.20,372.00" fill="url(#gfront)" filter="url(#nzb)"/><line x1="289.20" y1="87.72" x2="326.00" y2="78.95" stroke="#cdc8cc" stroke-width="0.85" /><line x1="289.20" y1="95.84" x2="326.00" y2="87.51" stroke="#cdc8cc" stroke-width="0.85" /><line x1="289.20" y1="103.97" x2="326.00" y2="96.06" stroke="#cdc8cc" stroke-width="0.85" /><line x1="289.20" y1="112.09" x2="326.00" y2="104.61" stroke="#cdc8cc" stroke-width="0.85" /><line x1="289.20" y1="120.21" x2="326.00" y2="113.16" stroke="#cdc8cc" stroke-width="0.85" /><line x1="289.20" y1="128.33" x2="326.00" y2="121.72" stroke="#cdc8cc" stroke-width="0.85" /><line x1="289.20" y1="136.46" x2="326.00" y2="130.27" stroke="#cdc8cc" stroke-width="0.85" /><line x1="289.20" y1="144.58" x2="326.00" y2="138.82" stroke="#cdc8cc" stroke-width="0.85" /><line x1="289.20" y1="152.70" x2="326.00" y2="147.38" stroke="#cdc8cc" stroke-width="0.85" /><line x1="289.20" y1="160.82" x2="326.00" y2="155.93" stroke="#cdc8cc" stroke-width="0.85" /><line x1="289.20" y1="168.94" x2="326.00" y2="164.48" stroke="#cdc8cc" stroke-width="0.85" /><line x1="289.20" y1="177.07" x2="326.00" y2="173.03" stroke="#cdc8cc" stroke-width="0.85" /><line x1="289.20" y1="185.19" x2="326.00" y2="181.59" stroke="#cdc8cc" stroke-width="0.85" /><line x1="289.20" y1="193.31" x2="326.00" y2="190.14" stroke="#cdc8cc" stroke-width="0.85" /><line x1="289.20" y1="201.43" x2="326.00" y2="198.69" stroke="#cdc8cc" stroke-width="0.85" /><line x1="289.20" y1="209.56" x2="326.00" y2="207.24" stroke="#cdc8cc" stroke-width="0.85" /><line x1="289.20" y1="217.68" x2="326.00" y2="215.80" stroke="#cdc8cc" stroke-width="0.85" /><line x1="289.20" y1="225.80" x2="326.00" y2="224.35" stroke="#cdc8cc" stroke-width="0.85" /><line x1="289.20" y1="233.92" x2="326.00" y2="232.90" stroke="#cdc8cc" stroke-width="0.85" /><line x1="289.20" y1="242.04" x2="326.00" y2="241.46" stroke="#cdc8cc" stroke-width="0.85" /><line x1="289.20" y1="250.17" x2="326.00" y2="250.01" stroke="#cdc8cc" stroke-width="0.85" /><line x1="289.20" y1="258.29" x2="326.00" y2="258.56" stroke="#cdc8cc" stroke-width="0.85" /><line x1="289.20" y1="266.41" x2="326.00" y2="267.11" stroke="#cdc8cc" stroke-width="0.85" /><line x1="289.20" y1="274.53" x2="326.00" y2="275.67" stroke="#cdc8cc" stroke-width="0.85" /><line x1="289.20" y1="282.66" x2="326.00" y2="284.22" stroke="#cdc8cc" stroke-width="0.85" /><line x1="289.20" y1="290.78" x2="326.00" y2="292.77" stroke="#cdc8cc" stroke-width="0.85" /><line x1="289.20" y1="298.90" x2="326.00" y2="301.32" stroke="#cdc8cc" stroke-width="0.85" /><line x1="289.20" y1="307.02" x2="326.00" y2="309.88" stroke="#cdc8cc" stroke-width="0.85" /><line x1="289.20" y1="315.14" x2="326.00" y2="318.43" stroke="#cdc8cc" stroke-width="0.85" /><line x1="289.20" y1="323.27" x2="326.00" y2="326.98" stroke="#cdc8cc" stroke-width="0.85" /><line x1="289.20" y1="331.39" x2="326.00" y2="335.54" stroke="#cdc8cc" stroke-width="0.85" /><line x1="289.20" y1="339.51" x2="326.00" y2="344.09" stroke="#cdc8cc" stroke-width="0.85" /><line x1="289.20" y1="347.63" x2="326.00" y2="352.64" stroke="#cdc8cc" stroke-width="0.85" /><line x1="289.20" y1="355.76" x2="326.00" y2="361.19" stroke="#cdc8cc" stroke-width="0.85" /><line x1="289.20" y1="363.88" x2="326.00" y2="369.75" stroke="#cdc8cc" stroke-width="0.85" /><line x1="300.54" y1="76.77" x2="300.54" y2="85.02" stroke="#cdc8cc" stroke-width="0.85" /><line x1="321.93" y1="71.42" x2="321.93" y2="79.92" stroke="#cdc8cc" stroke-width="0.85" /><line x1="289.84" y1="87.57" x2="289.84" y2="95.70" stroke="#cdc8cc" stroke-width="0.85" /><line x1="311.24" y1="82.47" x2="311.24" y2="90.85" stroke="#cdc8cc" stroke-width="0.85" /><line x1="300.54" y1="93.27" x2="300.54" y2="101.53" stroke="#cdc8cc" stroke-width="0.85" /><line x1="321.93" y1="88.43" x2="321.93" y2="96.93" stroke="#cdc8cc" stroke-width="0.85" /><line x1="289.84" y1="103.83" x2="289.84" y2="111.96" stroke="#cdc8cc" stroke-width="0.85" /><line x1="311.24" y1="99.23" x2="311.24" y2="107.61" stroke="#cdc8cc" stroke-width="0.85" /><line x1="300.54" y1="109.78" x2="300.54" y2="118.04" stroke="#cdc8cc" stroke-width="0.85" /><line x1="321.93" y1="105.44" x2="321.93" y2="113.94" stroke="#cdc8cc" stroke-width="0.85" /><line x1="289.84" y1="120.09" x2="289.84" y2="128.22" stroke="#cdc8cc" stroke-width="0.85" /><line x1="311.24" y1="115.99" x2="311.24" y2="124.37" stroke="#cdc8cc" stroke-width="0.85" /><line x1="300.54" y1="126.29" x2="300.54" y2="134.55" stroke="#cdc8cc" stroke-width="0.85" /><line x1="321.93" y1="122.45" x2="321.93" y2="130.95" stroke="#cdc8cc" stroke-width="0.85" /><line x1="289.84" y1="136.35" x2="289.84" y2="144.48" stroke="#cdc8cc" stroke-width="0.85" /><line x1="311.24" y1="132.75" x2="311.24" y2="141.13" stroke="#cdc8cc" stroke-width="0.85" /><line x1="300.54" y1="142.80" x2="300.54" y2="151.06" stroke="#cdc8cc" stroke-width="0.85" /><line x1="321.93" y1="139.46" x2="321.93" y2="147.96" stroke="#cdc8cc" stroke-width="0.85" /><line x1="289.84" y1="152.61" x2="289.84" y2="160.74" stroke="#cdc8cc" stroke-width="0.85" /><line x1="311.24" y1="149.51" x2="311.24" y2="157.89" stroke="#cdc8cc" stroke-width="0.85" /><line x1="300.54" y1="159.31" x2="300.54" y2="167.57" stroke="#cdc8cc" stroke-width="0.85" /><line x1="321.93" y1="156.47" x2="321.93" y2="164.97" stroke="#cdc8cc" stroke-width="0.85" /><line x1="289.84" y1="168.87" x2="289.84" y2="177.00" stroke="#cdc8cc" stroke-width="0.85" /><line x1="311.24" y1="166.27" x2="311.24" y2="174.65" stroke="#cdc8cc" stroke-width="0.85" /><line x1="300.54" y1="175.82" x2="300.54" y2="184.08" stroke="#cdc8cc" stroke-width="0.85" /><line x1="321.93" y1="173.48" x2="321.93" y2="181.98" stroke="#cdc8cc" stroke-width="0.85" /><line x1="289.84" y1="185.13" x2="289.84" y2="193.26" stroke="#cdc8cc" stroke-width="0.85" /><line x1="311.24" y1="183.03" x2="311.24" y2="191.41" stroke="#cdc8cc" stroke-width="0.85" /><line x1="300.54" y1="192.33" x2="300.54" y2="200.59" stroke="#cdc8cc" stroke-width="0.85" /><line x1="321.93" y1="190.49" x2="321.93" y2="198.99" stroke="#cdc8cc" stroke-width="0.85" /><line x1="289.84" y1="201.39" x2="289.84" y2="209.52" stroke="#cdc8cc" stroke-width="0.85" /><line x1="311.24" y1="199.79" x2="311.24" y2="208.17" stroke="#cdc8cc" stroke-width="0.85" /><line x1="300.54" y1="208.84" x2="300.54" y2="217.10" stroke="#cdc8cc" stroke-width="0.85" /><line x1="321.93" y1="207.50" x2="321.93" y2="216.00" stroke="#cdc8cc" stroke-width="0.85" /><line x1="289.84" y1="217.64" x2="289.84" y2="225.77" stroke="#cdc8cc" stroke-width="0.85" /><line x1="311.24" y1="216.55" x2="311.24" y2="224.93" stroke="#cdc8cc" stroke-width="0.85" /><line x1="300.54" y1="225.35" x2="300.54" y2="233.61" stroke="#cdc8cc" stroke-width="0.85" /><line x1="321.93" y1="224.51" x2="321.93" y2="233.02" stroke="#cdc8cc" stroke-width="0.85" /><line x1="289.84" y1="233.90" x2="289.84" y2="242.03" stroke="#cdc8cc" stroke-width="0.85" /><line x1="311.24" y1="233.31" x2="311.24" y2="241.69" stroke="#cdc8cc" stroke-width="0.85" /><line x1="300.54" y1="241.86" x2="300.54" y2="250.12" stroke="#cdc8cc" stroke-width="0.85" /><line x1="321.93" y1="241.52" x2="321.93" y2="250.03" stroke="#cdc8cc" stroke-width="0.85" /><line x1="289.84" y1="250.16" x2="289.84" y2="258.29" stroke="#cdc8cc" stroke-width="0.85" /><line x1="311.24" y1="250.07" x2="311.24" y2="258.45" stroke="#cdc8cc" stroke-width="0.85" /><line x1="300.54" y1="258.37" x2="300.54" y2="266.63" stroke="#cdc8cc" stroke-width="0.85" /><line x1="321.93" y1="258.53" x2="321.93" y2="267.04" stroke="#cdc8cc" stroke-width="0.85" /><line x1="289.84" y1="266.42" x2="289.84" y2="274.55" stroke="#cdc8cc" stroke-width="0.85" /><line x1="311.24" y1="266.83" x2="311.24" y2="275.21" stroke="#cdc8cc" stroke-width="0.85" /><line x1="300.54" y1="274.88" x2="300.54" y2="283.14" stroke="#cdc8cc" stroke-width="0.85" /><line x1="321.93" y1="275.54" x2="321.93" y2="284.05" stroke="#cdc8cc" stroke-width="0.85" /><line x1="289.84" y1="282.68" x2="289.84" y2="290.81" stroke="#cdc8cc" stroke-width="0.85" /><line x1="311.24" y1="283.59" x2="311.24" y2="291.97" stroke="#cdc8cc" stroke-width="0.85" /><line x1="300.54" y1="291.39" x2="300.54" y2="299.65" stroke="#cdc8cc" stroke-width="0.85" /><line x1="321.93" y1="292.55" x2="321.93" y2="301.06" stroke="#cdc8cc" stroke-width="0.85" /><line x1="289.84" y1="298.94" x2="289.84" y2="307.07" stroke="#cdc8cc" stroke-width="0.85" /><line x1="311.24" y1="300.35" x2="311.24" y2="308.73" stroke="#cdc8cc" stroke-width="0.85" /><line x1="300.54" y1="307.90" x2="300.54" y2="316.16" stroke="#cdc8cc" stroke-width="0.85" /><line x1="321.93" y1="309.56" x2="321.93" y2="318.07" stroke="#cdc8cc" stroke-width="0.85" /><line x1="289.84" y1="315.20" x2="289.84" y2="323.33" stroke="#cdc8cc" stroke-width="0.85" /><line x1="311.24" y1="317.11" x2="311.24" y2="325.49" stroke="#cdc8cc" stroke-width="0.85" /><line x1="300.54" y1="324.41" x2="300.54" y2="332.67" stroke="#cdc8cc" stroke-width="0.85" /><line x1="321.93" y1="326.57" x2="321.93" y2="335.08" stroke="#cdc8cc" stroke-width="0.85" /><line x1="289.84" y1="331.46" x2="289.84" y2="339.59" stroke="#cdc8cc" stroke-width="0.85" /><line x1="311.24" y1="333.87" x2="311.24" y2="342.25" stroke="#cdc8cc" stroke-width="0.85" /><line x1="300.54" y1="340.92" x2="300.54" y2="349.18" stroke="#cdc8cc" stroke-width="0.85" /><line x1="321.93" y1="343.58" x2="321.93" y2="352.09" stroke="#cdc8cc" stroke-width="0.85" /><line x1="289.84" y1="347.72" x2="289.84" y2="355.85" stroke="#cdc8cc" stroke-width="0.85" /><line x1="311.24" y1="350.63" x2="311.24" y2="359.01" stroke="#cdc8cc" stroke-width="0.85" /><line x1="300.54" y1="357.43" x2="300.54" y2="365.69" stroke="#cdc8cc" stroke-width="0.85" /><line x1="321.93" y1="360.59" x2="321.93" y2="369.10" stroke="#cdc8cc" stroke-width="0.85" /><line x1="289.84" y1="363.98" x2="289.84" y2="372.11" stroke="#cdc8cc" stroke-width="0.85" /><line x1="311.24" y1="367.39" x2="311.24" y2="375.77" stroke="#cdc8cc" stroke-width="0.85" /><line x1="289.70" y1="79.60" x2="289.70" y2="372.00" stroke="#d2ccce" stroke-width="0.8" /><line x1="289.20" y1="80.10" x2="326.00" y2="70.90" stroke="#c9c1c1" stroke-width="0.7" /><polygon points="326.00,70.40 430.00,149.30 430.70,316.60 326.00,378.30" fill="url(#gside)" filter="url(#nzb)"/><line x1="326.00" y1="78.95" x2="430.02" y2="153.95" stroke="url(#gmort)" stroke-width="0.7" /><line x1="326.00" y1="87.51" x2="430.04" y2="158.59" stroke="url(#gmort)" stroke-width="0.7" /><line x1="326.00" y1="96.06" x2="430.06" y2="163.24" stroke="url(#gmort)" stroke-width="0.7" /><line x1="326.00" y1="104.61" x2="430.08" y2="167.89" stroke="url(#gmort)" stroke-width="0.7" /><line x1="326.00" y1="113.16" x2="430.10" y2="172.54" stroke="url(#gmort)" stroke-width="0.7" /><line x1="326.00" y1="121.72" x2="430.12" y2="177.18" stroke="url(#gmort)" stroke-width="0.7" /><line x1="326.00" y1="130.27" x2="430.14" y2="181.83" stroke="url(#gmort)" stroke-width="0.7" /><line x1="326.00" y1="138.82" x2="430.16" y2="186.48" stroke="url(#gmort)" stroke-width="0.7" /><line x1="326.00" y1="147.38" x2="430.18" y2="191.12" stroke="url(#gmort)" stroke-width="0.7" /><line x1="326.00" y1="155.93" x2="430.19" y2="195.77" stroke="url(#gmort)" stroke-width="0.7" /><line x1="326.00" y1="164.48" x2="430.21" y2="200.42" stroke="url(#gmort)" stroke-width="0.7" /><line x1="326.00" y1="173.03" x2="430.23" y2="205.07" stroke="url(#gmort)" stroke-width="0.7" /><line x1="326.00" y1="181.59" x2="430.25" y2="209.71" stroke="url(#gmort)" stroke-width="0.7" /><line x1="326.00" y1="190.14" x2="430.27" y2="214.36" stroke="url(#gmort)" stroke-width="0.7" /><line x1="326.00" y1="198.69" x2="430.29" y2="219.01" stroke="url(#gmort)" stroke-width="0.7" /><line x1="326.00" y1="207.24" x2="430.31" y2="223.66" stroke="url(#gmort)" stroke-width="0.7" /><line x1="326.00" y1="215.80" x2="430.33" y2="228.30" stroke="url(#gmort)" stroke-width="0.7" /><line x1="326.00" y1="224.35" x2="430.35" y2="232.95" stroke="url(#gmort)" stroke-width="0.7" /><line x1="326.00" y1="232.90" x2="430.37" y2="237.60" stroke="url(#gmort)" stroke-width="0.7" /><line x1="326.00" y1="241.46" x2="430.39" y2="242.24" stroke="url(#gmort)" stroke-width="0.7" /><line x1="326.00" y1="250.01" x2="430.41" y2="246.89" stroke="url(#gmort)" stroke-width="0.7" /><line x1="326.00" y1="258.56" x2="430.43" y2="251.54" stroke="url(#gmort)" stroke-width="0.7" /><line x1="326.00" y1="267.11" x2="430.45" y2="256.19" stroke="url(#gmort)" stroke-width="0.7" /><line x1="326.00" y1="275.67" x2="430.47" y2="260.83" stroke="url(#gmort)" stroke-width="0.7" /><line x1="326.00" y1="284.22" x2="430.49" y2="265.48" stroke="url(#gmort)" stroke-width="0.7" /><line x1="326.00" y1="292.77" x2="430.51" y2="270.13" stroke="url(#gmort)" stroke-width="0.7" /><line x1="326.00" y1="301.32" x2="430.52" y2="274.78" stroke="url(#gmort)" stroke-width="0.7" /><line x1="326.00" y1="309.88" x2="430.54" y2="279.42" stroke="url(#gmort)" stroke-width="0.7" /><line x1="326.00" y1="318.43" x2="430.56" y2="284.07" stroke="url(#gmort)" stroke-width="0.7" /><line x1="326.00" y1="326.98" x2="430.58" y2="288.72" stroke="url(#gmort)" stroke-width="0.7" /><line x1="326.00" y1="335.54" x2="430.60" y2="293.36" stroke="url(#gmort)" stroke-width="0.7" /><line x1="326.00" y1="344.09" x2="430.62" y2="298.01" stroke="url(#gmort)" stroke-width="0.7" /><line x1="326.00" y1="352.64" x2="430.64" y2="302.66" stroke="url(#gmort)" stroke-width="0.7" /><line x1="326.00" y1="361.19" x2="430.66" y2="307.31" stroke="url(#gmort)" stroke-width="0.7" /><line x1="326.00" y1="369.75" x2="430.68" y2="311.95" stroke="url(#gmort)" stroke-width="0.7" /><line x1="336.37" y1="78.26" x2="336.37" y2="86.43" stroke="url(#gmort)" stroke-width="0.55" /><line x1="346.02" y1="85.59" x2="346.03" y2="93.39" stroke="url(#gmort)" stroke-width="0.55" /><line x1="355.05" y1="92.44" x2="355.05" y2="99.90" stroke="url(#gmort)" stroke-width="0.55" /><line x1="363.49" y1="98.84" x2="363.50" y2="105.99" stroke="url(#gmort)" stroke-width="0.55" /><line x1="371.41" y1="104.85" x2="371.42" y2="111.70" stroke="url(#gmort)" stroke-width="0.55" /><line x1="378.85" y1="110.50" x2="378.86" y2="117.06" stroke="url(#gmort)" stroke-width="0.55" /><line x1="385.86" y1="115.81" x2="385.87" y2="122.12" stroke="url(#gmort)" stroke-width="0.55" /><line x1="392.47" y1="120.83" x2="392.49" y2="126.89" stroke="url(#gmort)" stroke-width="0.55" /><line x1="398.72" y1="125.57" x2="398.74" y2="131.39" stroke="url(#gmort)" stroke-width="0.55" /><line x1="404.63" y1="130.06" x2="404.65" y2="135.66" stroke="url(#gmort)" stroke-width="0.55" /><line x1="410.24" y1="134.31" x2="410.25" y2="139.70" stroke="url(#gmort)" stroke-width="0.55" /><line x1="415.56" y1="138.34" x2="415.57" y2="143.53" stroke="url(#gmort)" stroke-width="0.55" /><line x1="420.61" y1="142.18" x2="420.63" y2="147.18" stroke="url(#gmort)" stroke-width="0.55" /><line x1="425.42" y1="145.82" x2="425.44" y2="150.64" stroke="url(#gmort)" stroke-width="0.55" /><line x1="331.28" y1="82.76" x2="331.28" y2="91.11" stroke="url(#gmort)" stroke-width="0.55" /><line x1="341.28" y1="89.97" x2="341.29" y2="97.95" stroke="url(#gmort)" stroke-width="0.55" /><line x1="350.62" y1="96.70" x2="350.62" y2="104.33" stroke="url(#gmort)" stroke-width="0.55" /><line x1="359.34" y1="102.99" x2="359.35" y2="110.29" stroke="url(#gmort)" stroke-width="0.55" /><line x1="367.52" y1="108.89" x2="367.53" y2="115.88" stroke="url(#gmort)" stroke-width="0.55" /><line x1="375.20" y1="114.42" x2="375.21" y2="121.13" stroke="url(#gmort)" stroke-width="0.55" /><line x1="382.42" y1="119.63" x2="382.43" y2="126.06" stroke="url(#gmort)" stroke-width="0.55" /><line x1="389.23" y1="124.54" x2="389.24" y2="130.72" stroke="url(#gmort)" stroke-width="0.55" /><line x1="395.65" y1="129.17" x2="395.67" y2="135.11" stroke="url(#gmort)" stroke-width="0.55" /><line x1="401.73" y1="133.55" x2="401.75" y2="139.26" stroke="url(#gmort)" stroke-width="0.55" /><line x1="407.49" y1="137.70" x2="407.50" y2="143.20" stroke="url(#gmort)" stroke-width="0.55" /><line x1="412.95" y1="141.64" x2="412.96" y2="146.93" stroke="url(#gmort)" stroke-width="0.55" /><line x1="418.13" y1="145.38" x2="418.15" y2="150.47" stroke="url(#gmort)" stroke-width="0.55" /><line x1="423.06" y1="148.93" x2="423.08" y2="153.84" stroke="url(#gmort)" stroke-width="0.55" /><line x1="427.76" y1="152.32" x2="427.77" y2="157.05" stroke="url(#gmort)" stroke-width="0.55" /><line x1="336.37" y1="94.59" x2="336.37" y2="102.76" stroke="url(#gmort)" stroke-width="0.55" /><line x1="346.03" y1="101.19" x2="346.04" y2="108.99" stroke="url(#gmort)" stroke-width="0.55" /><line x1="355.06" y1="107.36" x2="355.06" y2="114.82" stroke="url(#gmort)" stroke-width="0.55" /><line x1="363.50" y1="113.13" x2="363.51" y2="120.28" stroke="url(#gmort)" stroke-width="0.55" /><line x1="371.43" y1="118.54" x2="371.43" y2="125.39" stroke="url(#gmort)" stroke-width="0.55" /><line x1="378.87" y1="123.63" x2="378.88" y2="130.20" stroke="url(#gmort)" stroke-width="0.55" /><line x1="385.88" y1="128.42" x2="385.90" y2="134.73" stroke="url(#gmort)" stroke-width="0.55" /><line x1="392.50" y1="132.94" x2="392.51" y2="139.00" stroke="url(#gmort)" stroke-width="0.55" /><line x1="398.75" y1="137.21" x2="398.76" y2="143.04" stroke="url(#gmort)" stroke-width="0.55" /><line x1="404.66" y1="141.26" x2="404.68" y2="146.86" stroke="url(#gmort)" stroke-width="0.55" /><line x1="410.27" y1="145.09" x2="410.28" y2="150.48" stroke="url(#gmort)" stroke-width="0.55" /><line x1="415.59" y1="148.72" x2="415.61" y2="153.91" stroke="url(#gmort)" stroke-width="0.55" /><line x1="420.64" y1="152.18" x2="420.66" y2="157.18" stroke="url(#gmort)" stroke-width="0.55" /><line x1="425.46" y1="155.46" x2="425.47" y2="160.28" stroke="url(#gmort)" stroke-width="0.55" /><line x1="331.28" y1="99.47" x2="331.28" y2="107.82" stroke="url(#gmort)" stroke-width="0.55" /><line x1="341.29" y1="105.93" x2="341.29" y2="113.91" stroke="url(#gmort)" stroke-width="0.55" /><line x1="350.62" y1="111.96" x2="350.63" y2="119.59" stroke="url(#gmort)" stroke-width="0.55" /><line x1="359.35" y1="117.59" x2="359.36" y2="124.89" stroke="url(#gmort)" stroke-width="0.55" /><line x1="367.53" y1="122.87" x2="367.54" y2="129.87" stroke="url(#gmort)" stroke-width="0.55" /><line x1="375.21" y1="127.83" x2="375.22" y2="134.54" stroke="url(#gmort)" stroke-width="0.55" /><line x1="382.44" y1="132.50" x2="382.45" y2="138.93" stroke="url(#gmort)" stroke-width="0.55" /><line x1="389.25" y1="136.90" x2="389.26" y2="143.07" stroke="url(#gmort)" stroke-width="0.55" /><line x1="395.68" y1="141.05" x2="395.69" y2="146.98" stroke="url(#gmort)" stroke-width="0.55" /><line x1="401.76" y1="144.97" x2="401.77" y2="150.68" stroke="url(#gmort)" stroke-width="0.55" /><line x1="407.52" y1="148.69" x2="407.53" y2="154.18" stroke="url(#gmort)" stroke-width="0.55" /><line x1="412.98" y1="152.22" x2="413.00" y2="157.50" stroke="url(#gmort)" stroke-width="0.55" /><line x1="418.17" y1="155.56" x2="418.18" y2="160.66" stroke="url(#gmort)" stroke-width="0.55" /><line x1="423.10" y1="158.75" x2="423.12" y2="163.66" stroke="url(#gmort)" stroke-width="0.55" /><line x1="427.79" y1="161.78" x2="427.81" y2="166.51" stroke="url(#gmort)" stroke-width="0.55" /><line x1="336.37" y1="110.92" x2="336.38" y2="119.08" stroke="url(#gmort)" stroke-width="0.55" /><line x1="346.04" y1="116.80" x2="346.04" y2="124.60" stroke="url(#gmort)" stroke-width="0.55" /><line x1="355.07" y1="122.28" x2="355.07" y2="129.75" stroke="url(#gmort)" stroke-width="0.55" /><line x1="363.52" y1="127.42" x2="363.52" y2="134.57" stroke="url(#gmort)" stroke-width="0.55" /><line x1="371.44" y1="132.24" x2="371.45" y2="139.09" stroke="url(#gmort)" stroke-width="0.55" /><line x1="378.89" y1="136.77" x2="378.90" y2="143.34" stroke="url(#gmort)" stroke-width="0.55" /><line x1="385.91" y1="141.03" x2="385.92" y2="147.34" stroke="url(#gmort)" stroke-width="0.55" /><line x1="392.52" y1="145.06" x2="392.54" y2="151.11" stroke="url(#gmort)" stroke-width="0.55" /><line x1="398.78" y1="148.86" x2="398.79" y2="154.68" stroke="url(#gmort)" stroke-width="0.55" /><line x1="404.69" y1="152.46" x2="404.71" y2="158.06" stroke="url(#gmort)" stroke-width="0.55" /><line x1="410.30" y1="155.86" x2="410.32" y2="161.25" stroke="url(#gmort)" stroke-width="0.55" /><line x1="415.62" y1="159.10" x2="415.64" y2="164.29" stroke="url(#gmort)" stroke-width="0.55" /><line x1="420.68" y1="162.18" x2="420.70" y2="167.18" stroke="url(#gmort)" stroke-width="0.55" /><line x1="425.49" y1="165.10" x2="425.51" y2="169.92" stroke="url(#gmort)" stroke-width="0.55" /><line x1="331.28" y1="116.18" x2="331.28" y2="124.53" stroke="url(#gmort)" stroke-width="0.55" /><line x1="341.29" y1="121.89" x2="341.30" y2="129.87" stroke="url(#gmort)" stroke-width="0.55" /><line x1="350.63" y1="127.21" x2="350.64" y2="134.84" stroke="url(#gmort)" stroke-width="0.55" /><line x1="359.37" y1="132.19" x2="359.37" y2="139.50" stroke="url(#gmort)" stroke-width="0.55" /><line x1="367.55" y1="136.86" x2="367.56" y2="143.86" stroke="url(#gmort)" stroke-width="0.55" /><line x1="375.23" y1="141.24" x2="375.24" y2="147.95" stroke="url(#gmort)" stroke-width="0.55" /><line x1="382.46" y1="145.37" x2="382.47" y2="151.80" stroke="url(#gmort)" stroke-width="0.55" /><line x1="389.27" y1="149.25" x2="389.29" y2="155.43" stroke="url(#gmort)" stroke-width="0.55" /><line x1="395.71" y1="152.92" x2="395.72" y2="158.86" stroke="url(#gmort)" stroke-width="0.55" /><line x1="401.79" y1="156.39" x2="401.80" y2="162.10" stroke="url(#gmort)" stroke-width="0.55" /><line x1="407.55" y1="159.68" x2="407.56" y2="165.17" stroke="url(#gmort)" stroke-width="0.55" /><line x1="413.01" y1="162.79" x2="413.03" y2="168.08" stroke="url(#gmort)" stroke-width="0.55" /><line x1="418.20" y1="165.75" x2="418.22" y2="170.84" stroke="url(#gmort)" stroke-width="0.55" /><line x1="423.13" y1="168.56" x2="423.15" y2="173.47" stroke="url(#gmort)" stroke-width="0.55" /><line x1="427.83" y1="171.24" x2="427.85" y2="175.98" stroke="url(#gmort)" stroke-width="0.55" /><line x1="336.38" y1="127.25" x2="336.38" y2="135.41" stroke="url(#gmort)" stroke-width="0.55" /><line x1="346.05" y1="132.40" x2="346.05" y2="140.20" stroke="url(#gmort)" stroke-width="0.55" /><line x1="355.08" y1="137.21" x2="355.08" y2="144.67" stroke="url(#gmort)" stroke-width="0.55" /><line x1="363.53" y1="141.71" x2="363.54" y2="148.86" stroke="url(#gmort)" stroke-width="0.55" /><line x1="371.46" y1="145.93" x2="371.47" y2="152.78" stroke="url(#gmort)" stroke-width="0.55" /><line x1="378.91" y1="149.90" x2="378.92" y2="156.47" stroke="url(#gmort)" stroke-width="0.55" /><line x1="385.93" y1="153.64" x2="385.94" y2="159.95" stroke="url(#gmort)" stroke-width="0.55" /><line x1="392.55" y1="157.17" x2="392.56" y2="163.23" stroke="url(#gmort)" stroke-width="0.55" /><line x1="398.80" y1="160.50" x2="398.82" y2="166.32" stroke="url(#gmort)" stroke-width="0.55" /><line x1="404.72" y1="163.65" x2="404.74" y2="169.25" stroke="url(#gmort)" stroke-width="0.55" /><line x1="410.33" y1="166.64" x2="410.35" y2="172.03" stroke="url(#gmort)" stroke-width="0.55" /><line x1="415.66" y1="169.48" x2="415.67" y2="174.67" stroke="url(#gmort)" stroke-width="0.55" /><line x1="420.72" y1="172.18" x2="420.73" y2="177.17" stroke="url(#gmort)" stroke-width="0.55" /><line x1="425.53" y1="174.74" x2="425.55" y2="179.56" stroke="url(#gmort)" stroke-width="0.55" /><line x1="331.28" y1="132.89" x2="331.28" y2="141.24" stroke="url(#gmort)" stroke-width="0.55" /><line x1="341.30" y1="137.84" x2="341.30" y2="145.82" stroke="url(#gmort)" stroke-width="0.55" /><line x1="350.64" y1="142.47" x2="350.65" y2="150.10" stroke="url(#gmort)" stroke-width="0.55" /><line x1="359.38" y1="146.80" x2="359.39" y2="154.10" stroke="url(#gmort)" stroke-width="0.55" /><line x1="367.57" y1="150.85" x2="367.57" y2="157.84" stroke="url(#gmort)" stroke-width="0.55" /><line x1="375.25" y1="154.66" x2="375.26" y2="161.36" stroke="url(#gmort)" stroke-width="0.55" /><line x1="382.48" y1="158.24" x2="382.49" y2="164.67" stroke="url(#gmort)" stroke-width="0.55" /><line x1="389.30" y1="161.61" x2="389.31" y2="167.79" stroke="url(#gmort)" stroke-width="0.55" /><line x1="395.73" y1="164.80" x2="395.75" y2="170.73" stroke="url(#gmort)" stroke-width="0.55" /><line x1="401.82" y1="167.81" x2="401.83" y2="173.52" stroke="url(#gmort)" stroke-width="0.55" /><line x1="407.58" y1="170.66" x2="407.59" y2="176.16" stroke="url(#gmort)" stroke-width="0.55" /><line x1="413.04" y1="173.37" x2="413.06" y2="178.66" stroke="url(#gmort)" stroke-width="0.55" /><line x1="418.23" y1="175.94" x2="418.25" y2="181.03" stroke="url(#gmort)" stroke-width="0.55" /><line x1="423.17" y1="178.38" x2="423.19" y2="183.29" stroke="url(#gmort)" stroke-width="0.55" /><line x1="427.87" y1="180.71" x2="427.89" y2="185.44" stroke="url(#gmort)" stroke-width="0.55" /><line x1="336.38" y1="143.57" x2="336.38" y2="151.74" stroke="url(#gmort)" stroke-width="0.55" /><line x1="346.05" y1="148.00" x2="346.06" y2="155.80" stroke="url(#gmort)" stroke-width="0.55" /><line x1="355.09" y1="152.13" x2="355.09" y2="159.59" stroke="url(#gmort)" stroke-width="0.55" /><line x1="363.54" y1="156.00" x2="363.55" y2="163.15" stroke="url(#gmort)" stroke-width="0.55" /><line x1="371.48" y1="159.63" x2="371.48" y2="166.48" stroke="url(#gmort)" stroke-width="0.55" /><line x1="378.93" y1="163.04" x2="378.94" y2="169.61" stroke="url(#gmort)" stroke-width="0.55" /><line x1="385.95" y1="166.25" x2="385.96" y2="172.56" stroke="url(#gmort)" stroke-width="0.55" /><line x1="392.57" y1="169.28" x2="392.59" y2="175.34" stroke="url(#gmort)" stroke-width="0.55" /><line x1="398.83" y1="172.15" x2="398.84" y2="177.97" stroke="url(#gmort)" stroke-width="0.55" /><line x1="404.75" y1="174.85" x2="404.77" y2="180.45" stroke="url(#gmort)" stroke-width="0.55" /><line x1="410.36" y1="177.42" x2="410.38" y2="182.81" stroke="url(#gmort)" stroke-width="0.55" /><line x1="415.69" y1="179.86" x2="415.71" y2="185.05" stroke="url(#gmort)" stroke-width="0.55" /><line x1="420.75" y1="182.17" x2="420.77" y2="187.17" stroke="url(#gmort)" stroke-width="0.55" /><line x1="425.57" y1="184.38" x2="425.59" y2="189.20" stroke="url(#gmort)" stroke-width="0.55" /><line x1="331.29" y1="149.59" x2="331.29" y2="157.95" stroke="url(#gmort)" stroke-width="0.55" /><line x1="341.31" y1="153.80" x2="341.31" y2="161.78" stroke="url(#gmort)" stroke-width="0.55" /><line x1="350.65" y1="157.73" x2="350.66" y2="165.36" stroke="url(#gmort)" stroke-width="0.55" /><line x1="359.39" y1="161.40" x2="359.40" y2="168.70" stroke="url(#gmort)" stroke-width="0.55" /><line x1="367.58" y1="164.84" x2="367.59" y2="171.83" stroke="url(#gmort)" stroke-width="0.55" /><line x1="375.27" y1="168.07" x2="375.28" y2="174.77" stroke="url(#gmort)" stroke-width="0.55" /><line x1="382.50" y1="171.10" x2="382.51" y2="177.54" stroke="url(#gmort)" stroke-width="0.55" /><line x1="389.32" y1="173.97" x2="389.33" y2="180.15" stroke="url(#gmort)" stroke-width="0.55" /><line x1="395.76" y1="176.67" x2="395.77" y2="182.61" stroke="url(#gmort)" stroke-width="0.55" /><line x1="401.85" y1="179.23" x2="401.86" y2="184.94" stroke="url(#gmort)" stroke-width="0.55" /><line x1="407.61" y1="181.65" x2="407.63" y2="187.14" stroke="url(#gmort)" stroke-width="0.55" /><line x1="413.08" y1="183.94" x2="413.09" y2="189.23" stroke="url(#gmort)" stroke-width="0.55" /><line x1="418.27" y1="186.12" x2="418.29" y2="191.22" stroke="url(#gmort)" stroke-width="0.55" /><line x1="423.21" y1="188.20" x2="423.22" y2="193.11" stroke="url(#gmort)" stroke-width="0.55" /><line x1="427.91" y1="190.17" x2="427.93" y2="194.91" stroke="url(#gmort)" stroke-width="0.55" /><line x1="336.39" y1="159.90" x2="336.39" y2="168.06" stroke="url(#gmort)" stroke-width="0.55" /><line x1="346.06" y1="163.60" x2="346.07" y2="171.40" stroke="url(#gmort)" stroke-width="0.55" /><line x1="355.10" y1="167.06" x2="355.10" y2="174.52" stroke="url(#gmort)" stroke-width="0.55" /><line x1="363.56" y1="170.29" x2="363.57" y2="177.44" stroke="url(#gmort)" stroke-width="0.55" /><line x1="371.49" y1="173.32" x2="371.50" y2="180.17" stroke="url(#gmort)" stroke-width="0.55" /><line x1="378.95" y1="176.18" x2="378.96" y2="182.74" stroke="url(#gmort)" stroke-width="0.55" /><line x1="385.97" y1="178.86" x2="385.99" y2="185.17" stroke="url(#gmort)" stroke-width="0.55" /><line x1="392.60" y1="181.40" x2="392.61" y2="187.45" stroke="url(#gmort)" stroke-width="0.55" /><line x1="398.86" y1="183.79" x2="398.87" y2="189.61" stroke="url(#gmort)" stroke-width="0.55" /><line x1="404.78" y1="186.05" x2="404.80" y2="191.65" stroke="url(#gmort)" stroke-width="0.55" /><line x1="410.40" y1="188.20" x2="410.41" y2="193.59" stroke="url(#gmort)" stroke-width="0.55" /><line x1="415.72" y1="190.24" x2="415.74" y2="195.43" stroke="url(#gmort)" stroke-width="0.55" /><line x1="420.79" y1="192.17" x2="420.80" y2="197.17" stroke="url(#gmort)" stroke-width="0.55" /><line x1="425.60" y1="194.02" x2="425.62" y2="198.84" stroke="url(#gmort)" stroke-width="0.55" /><line x1="331.29" y1="166.30" x2="331.29" y2="174.66" stroke="url(#gmort)" stroke-width="0.55" /><line x1="341.31" y1="169.76" x2="341.31" y2="177.74" stroke="url(#gmort)" stroke-width="0.55" /><line x1="350.66" y1="172.99" x2="350.67" y2="180.61" stroke="url(#gmort)" stroke-width="0.55" /><line x1="359.40" y1="176.00" x2="359.41" y2="183.30" stroke="url(#gmort)" stroke-width="0.55" /><line x1="367.60" y1="178.83" x2="367.60" y2="185.82" stroke="url(#gmort)" stroke-width="0.55" /><line x1="375.29" y1="181.48" x2="375.30" y2="188.18" stroke="url(#gmort)" stroke-width="0.55" /><line x1="382.53" y1="183.97" x2="382.54" y2="190.41" stroke="url(#gmort)" stroke-width="0.55" /><line x1="389.35" y1="186.33" x2="389.36" y2="192.50" stroke="url(#gmort)" stroke-width="0.55" /><line x1="395.78" y1="188.55" x2="395.80" y2="194.48" stroke="url(#gmort)" stroke-width="0.55" /><line x1="401.87" y1="190.65" x2="401.89" y2="196.36" stroke="url(#gmort)" stroke-width="0.55" /><line x1="407.64" y1="192.63" x2="407.66" y2="198.13" stroke="url(#gmort)" stroke-width="0.55" /><line x1="413.11" y1="194.52" x2="413.13" y2="199.81" stroke="url(#gmort)" stroke-width="0.55" /><line x1="418.30" y1="196.31" x2="418.32" y2="201.41" stroke="url(#gmort)" stroke-width="0.55" /><line x1="423.24" y1="198.02" x2="423.26" y2="202.92" stroke="url(#gmort)" stroke-width="0.55" /><line x1="427.95" y1="199.64" x2="427.96" y2="204.37" stroke="url(#gmort)" stroke-width="0.55" /><line x1="336.39" y1="176.23" x2="336.39" y2="184.39" stroke="url(#gmort)" stroke-width="0.55" /><line x1="346.07" y1="179.20" x2="346.07" y2="187.00" stroke="url(#gmort)" stroke-width="0.55" /><line x1="355.11" y1="181.98" x2="355.12" y2="189.44" stroke="url(#gmort)" stroke-width="0.55" /><line x1="363.57" y1="184.58" x2="363.58" y2="191.73" stroke="url(#gmort)" stroke-width="0.55" /><line x1="371.51" y1="187.02" x2="371.52" y2="193.87" stroke="url(#gmort)" stroke-width="0.55" /><line x1="378.97" y1="189.31" x2="378.98" y2="195.88" stroke="url(#gmort)" stroke-width="0.55" /><line x1="386.00" y1="191.47" x2="386.01" y2="197.78" stroke="url(#gmort)" stroke-width="0.55" /><line x1="392.62" y1="193.51" x2="392.64" y2="199.56" stroke="url(#gmort)" stroke-width="0.55" /><line x1="398.88" y1="195.43" x2="398.90" y2="201.25" stroke="url(#gmort)" stroke-width="0.55" /><line x1="404.81" y1="197.25" x2="404.83" y2="202.85" stroke="url(#gmort)" stroke-width="0.55" /><line x1="410.43" y1="198.98" x2="410.44" y2="204.37" stroke="url(#gmort)" stroke-width="0.55" /><line x1="415.76" y1="200.62" x2="415.77" y2="205.81" stroke="url(#gmort)" stroke-width="0.55" /><line x1="420.82" y1="202.17" x2="420.84" y2="207.17" stroke="url(#gmort)" stroke-width="0.55" /><line x1="425.64" y1="203.66" x2="425.66" y2="208.47" stroke="url(#gmort)" stroke-width="0.55" /><line x1="331.29" y1="183.01" x2="331.29" y2="191.37" stroke="url(#gmort)" stroke-width="0.55" /><line x1="341.32" y1="185.72" x2="341.32" y2="193.70" stroke="url(#gmort)" stroke-width="0.55" /><line x1="350.67" y1="188.24" x2="350.68" y2="195.87" stroke="url(#gmort)" stroke-width="0.55" /><line x1="359.42" y1="190.60" x2="359.42" y2="197.90" stroke="url(#gmort)" stroke-width="0.55" /><line x1="367.61" y1="192.81" x2="367.62" y2="199.81" stroke="url(#gmort)" stroke-width="0.55" /><line x1="375.31" y1="194.89" x2="375.32" y2="201.59" stroke="url(#gmort)" stroke-width="0.55" /><line x1="382.55" y1="196.84" x2="382.56" y2="203.28" stroke="url(#gmort)" stroke-width="0.55" /><line x1="389.37" y1="198.68" x2="389.38" y2="204.86" stroke="url(#gmort)" stroke-width="0.55" /><line x1="395.81" y1="200.42" x2="395.82" y2="206.36" stroke="url(#gmort)" stroke-width="0.55" /><line x1="401.90" y1="202.06" x2="401.92" y2="207.77" stroke="url(#gmort)" stroke-width="0.55" /><line x1="407.67" y1="203.62" x2="407.69" y2="209.11" stroke="url(#gmort)" stroke-width="0.55" /><line x1="413.14" y1="205.10" x2="413.16" y2="210.39" stroke="url(#gmort)" stroke-width="0.55" /><line x1="418.34" y1="206.50" x2="418.36" y2="211.59" stroke="url(#gmort)" stroke-width="0.55" /><line x1="423.28" y1="207.83" x2="423.30" y2="212.74" stroke="url(#gmort)" stroke-width="0.55" /><line x1="427.98" y1="209.10" x2="428.00" y2="213.83" stroke="url(#gmort)" stroke-width="0.55" /><line x1="336.39" y1="192.55" x2="336.40" y2="200.72" stroke="url(#gmort)" stroke-width="0.55" /><line x1="346.08" y1="194.80" x2="346.08" y2="202.60" stroke="url(#gmort)" stroke-width="0.55" /><line x1="355.12" y1="196.90" x2="355.13" y2="204.37" stroke="url(#gmort)" stroke-width="0.55" /><line x1="363.59" y1="198.87" x2="363.59" y2="206.02" stroke="url(#gmort)" stroke-width="0.55" /><line x1="371.53" y1="200.71" x2="371.54" y2="207.56" stroke="url(#gmort)" stroke-width="0.55" /><line x1="378.99" y1="202.45" x2="379.00" y2="209.02" stroke="url(#gmort)" stroke-width="0.55" /><line x1="386.02" y1="204.08" x2="386.03" y2="210.39" stroke="url(#gmort)" stroke-width="0.55" /><line x1="392.65" y1="205.62" x2="392.66" y2="211.68" stroke="url(#gmort)" stroke-width="0.55" /><line x1="398.91" y1="207.08" x2="398.93" y2="212.90" stroke="url(#gmort)" stroke-width="0.55" /><line x1="404.84" y1="208.45" x2="404.85" y2="214.05" stroke="url(#gmort)" stroke-width="0.55" /><line x1="410.46" y1="209.76" x2="410.47" y2="215.15" stroke="url(#gmort)" stroke-width="0.55" /><line x1="415.79" y1="211.00" x2="415.81" y2="216.19" stroke="url(#gmort)" stroke-width="0.55" /><line x1="420.86" y1="212.17" x2="420.87" y2="217.17" stroke="url(#gmort)" stroke-width="0.55" /><line x1="425.68" y1="213.29" x2="425.70" y2="218.11" stroke="url(#gmort)" stroke-width="0.55" /><line x1="331.29" y1="199.72" x2="331.29" y2="208.08" stroke="url(#gmort)" stroke-width="0.55" /><line x1="341.32" y1="201.68" x2="341.33" y2="209.66" stroke="url(#gmort)" stroke-width="0.55" /><line x1="350.68" y1="203.50" x2="350.68" y2="211.13" stroke="url(#gmort)" stroke-width="0.55" /><line x1="359.43" y1="205.20" x2="359.44" y2="212.50" stroke="url(#gmort)" stroke-width="0.55" /><line x1="367.63" y1="206.80" x2="367.63" y2="213.79" stroke="url(#gmort)" stroke-width="0.55" /><line x1="375.33" y1="208.30" x2="375.33" y2="215.01" stroke="url(#gmort)" stroke-width="0.55" /><line x1="382.57" y1="209.71" x2="382.58" y2="216.15" stroke="url(#gmort)" stroke-width="0.55" /><line x1="389.39" y1="211.04" x2="389.40" y2="217.22" stroke="url(#gmort)" stroke-width="0.55" /><line x1="395.84" y1="212.30" x2="395.85" y2="218.23" stroke="url(#gmort)" stroke-width="0.55" /><line x1="401.93" y1="213.48" x2="401.94" y2="219.19" stroke="url(#gmort)" stroke-width="0.55" /><line x1="407.70" y1="214.61" x2="407.72" y2="220.10" stroke="url(#gmort)" stroke-width="0.55" /><line x1="413.17" y1="215.67" x2="413.19" y2="220.96" stroke="url(#gmort)" stroke-width="0.55" /><line x1="418.37" y1="216.69" x2="418.39" y2="221.78" stroke="url(#gmort)" stroke-width="0.55" /><line x1="423.32" y1="217.65" x2="423.33" y2="222.56" stroke="url(#gmort)" stroke-width="0.55" /><line x1="428.02" y1="218.57" x2="428.04" y2="223.30" stroke="url(#gmort)" stroke-width="0.55" /><line x1="336.40" y1="208.88" x2="336.40" y2="217.04" stroke="url(#gmort)" stroke-width="0.55" /><line x1="346.08" y1="210.40" x2="346.09" y2="218.21" stroke="url(#gmort)" stroke-width="0.55" /><line x1="355.13" y1="211.83" x2="355.14" y2="219.29" stroke="url(#gmort)" stroke-width="0.55" /><line x1="363.60" y1="213.16" x2="363.61" y2="220.31" stroke="url(#gmort)" stroke-width="0.55" /><line x1="371.54" y1="214.41" x2="371.55" y2="221.26" stroke="url(#gmort)" stroke-width="0.55" /><line x1="379.01" y1="215.58" x2="379.02" y2="222.15" stroke="url(#gmort)" stroke-width="0.55" /><line x1="386.04" y1="216.69" x2="386.05" y2="223.00" stroke="url(#gmort)" stroke-width="0.55" /><line x1="392.67" y1="217.73" x2="392.69" y2="223.79" stroke="url(#gmort)" stroke-width="0.55" /><line x1="398.94" y1="218.72" x2="398.95" y2="224.54" stroke="url(#gmort)" stroke-width="0.55" /><line x1="404.87" y1="219.65" x2="404.88" y2="225.25" stroke="url(#gmort)" stroke-width="0.55" /><line x1="410.49" y1="220.54" x2="410.51" y2="225.93" stroke="url(#gmort)" stroke-width="0.55" /><line x1="415.82" y1="221.38" x2="415.84" y2="226.57" stroke="url(#gmort)" stroke-width="0.55" /><line x1="420.89" y1="222.17" x2="420.91" y2="227.17" stroke="url(#gmort)" stroke-width="0.55" /><line x1="425.72" y1="222.93" x2="425.73" y2="227.75" stroke="url(#gmort)" stroke-width="0.55" /><line x1="331.29" y1="216.43" x2="331.29" y2="224.79" stroke="url(#gmort)" stroke-width="0.55" /><line x1="341.33" y1="217.63" x2="341.33" y2="225.61" stroke="url(#gmort)" stroke-width="0.55" /><line x1="350.69" y1="218.76" x2="350.69" y2="226.39" stroke="url(#gmort)" stroke-width="0.55" /><line x1="359.44" y1="219.81" x2="359.45" y2="227.11" stroke="url(#gmort)" stroke-width="0.55" /><line x1="367.64" y1="220.79" x2="367.65" y2="227.78" stroke="url(#gmort)" stroke-width="0.55" /><line x1="375.34" y1="221.71" x2="375.35" y2="228.42" stroke="url(#gmort)" stroke-width="0.55" /><line x1="382.59" y1="222.58" x2="382.60" y2="229.01" stroke="url(#gmort)" stroke-width="0.55" /><line x1="389.42" y1="223.40" x2="389.43" y2="229.58" stroke="url(#gmort)" stroke-width="0.55" /><line x1="395.86" y1="224.17" x2="395.88" y2="230.11" stroke="url(#gmort)" stroke-width="0.55" /><line x1="401.96" y1="224.90" x2="401.97" y2="230.61" stroke="url(#gmort)" stroke-width="0.55" /><line x1="407.73" y1="225.59" x2="407.75" y2="231.09" stroke="url(#gmort)" stroke-width="0.55" /><line x1="413.21" y1="226.25" x2="413.22" y2="231.54" stroke="url(#gmort)" stroke-width="0.55" /><line x1="418.41" y1="226.87" x2="418.42" y2="231.97" stroke="url(#gmort)" stroke-width="0.55" /><line x1="423.35" y1="227.47" x2="423.37" y2="232.37" stroke="url(#gmort)" stroke-width="0.55" /><line x1="428.06" y1="228.03" x2="428.08" y2="232.76" stroke="url(#gmort)" stroke-width="0.55" /><line x1="336.40" y1="225.21" x2="336.40" y2="233.37" stroke="url(#gmort)" stroke-width="0.55" /><line x1="346.09" y1="226.01" x2="346.10" y2="233.81" stroke="url(#gmort)" stroke-width="0.55" /><line x1="355.14" y1="226.75" x2="355.15" y2="234.21" stroke="url(#gmort)" stroke-width="0.55" /><line x1="363.61" y1="227.45" x2="363.62" y2="234.59" stroke="url(#gmort)" stroke-width="0.55" /><line x1="371.56" y1="228.10" x2="371.57" y2="234.95" stroke="url(#gmort)" stroke-width="0.55" /><line x1="379.03" y1="228.72" x2="379.04" y2="235.29" stroke="url(#gmort)" stroke-width="0.55" /><line x1="386.06" y1="229.30" x2="386.07" y2="235.60" stroke="url(#gmort)" stroke-width="0.55" /><line x1="392.70" y1="229.85" x2="392.71" y2="235.90" stroke="url(#gmort)" stroke-width="0.55" /><line x1="398.97" y1="230.36" x2="398.98" y2="236.19" stroke="url(#gmort)" stroke-width="0.55" /><line x1="404.90" y1="230.85" x2="404.91" y2="236.45" stroke="url(#gmort)" stroke-width="0.55" /><line x1="410.52" y1="231.32" x2="410.54" y2="236.71" stroke="url(#gmort)" stroke-width="0.55" /><line x1="415.86" y1="231.76" x2="415.87" y2="236.95" stroke="url(#gmort)" stroke-width="0.55" /><line x1="420.93" y1="232.17" x2="420.95" y2="237.17" stroke="url(#gmort)" stroke-width="0.55" /><line x1="425.75" y1="232.57" x2="425.77" y2="237.39" stroke="url(#gmort)" stroke-width="0.55" /><line x1="331.30" y1="233.14" x2="331.30" y2="241.50" stroke="url(#gmort)" stroke-width="0.55" /><line x1="341.33" y1="233.59" x2="341.34" y2="241.57" stroke="url(#gmort)" stroke-width="0.55" /><line x1="350.70" y1="234.01" x2="350.70" y2="241.64" stroke="url(#gmort)" stroke-width="0.55" /><line x1="359.45" y1="234.41" x2="359.46" y2="241.71" stroke="url(#gmort)" stroke-width="0.55" /><line x1="367.66" y1="234.78" x2="367.67" y2="241.77" stroke="url(#gmort)" stroke-width="0.55" /><line x1="375.36" y1="235.12" x2="375.37" y2="241.83" stroke="url(#gmort)" stroke-width="0.55" /><line x1="382.61" y1="235.45" x2="382.62" y2="241.88" stroke="url(#gmort)" stroke-width="0.55" /><line x1="389.44" y1="235.76" x2="389.45" y2="241.94" stroke="url(#gmort)" stroke-width="0.55" /><line x1="395.89" y1="236.05" x2="395.90" y2="241.98" stroke="url(#gmort)" stroke-width="0.55" /><line x1="401.99" y1="236.32" x2="402.00" y2="242.03" stroke="url(#gmort)" stroke-width="0.55" /><line x1="407.76" y1="236.58" x2="407.78" y2="242.07" stroke="url(#gmort)" stroke-width="0.55" /><line x1="413.24" y1="236.83" x2="413.26" y2="242.11" stroke="url(#gmort)" stroke-width="0.55" /><line x1="418.44" y1="237.06" x2="418.46" y2="242.15" stroke="url(#gmort)" stroke-width="0.55" /><line x1="423.39" y1="237.28" x2="423.41" y2="242.19" stroke="url(#gmort)" stroke-width="0.55" /><line x1="428.10" y1="237.50" x2="428.12" y2="242.23" stroke="url(#gmort)" stroke-width="0.55" /><line x1="336.41" y1="241.53" x2="336.41" y2="249.70" stroke="url(#gmort)" stroke-width="0.55" /><line x1="346.10" y1="241.61" x2="346.10" y2="249.41" stroke="url(#gmort)" stroke-width="0.55" /><line x1="355.15" y1="241.68" x2="355.16" y2="249.14" stroke="url(#gmort)" stroke-width="0.55" /><line x1="363.63" y1="241.74" x2="363.64" y2="248.88" stroke="url(#gmort)" stroke-width="0.55" /><line x1="371.58" y1="241.80" x2="371.59" y2="248.65" stroke="url(#gmort)" stroke-width="0.55" /><line x1="379.05" y1="241.86" x2="379.06" y2="248.42" stroke="url(#gmort)" stroke-width="0.55" /><line x1="386.09" y1="241.91" x2="386.10" y2="248.21" stroke="url(#gmort)" stroke-width="0.55" /><line x1="392.72" y1="241.96" x2="392.74" y2="248.02" stroke="url(#gmort)" stroke-width="0.55" /><line x1="398.99" y1="242.01" x2="399.01" y2="247.83" stroke="url(#gmort)" stroke-width="0.55" /><line x1="404.93" y1="242.05" x2="404.94" y2="247.65" stroke="url(#gmort)" stroke-width="0.55" /><line x1="410.55" y1="242.09" x2="410.57" y2="247.48" stroke="url(#gmort)" stroke-width="0.55" /><line x1="415.89" y1="242.13" x2="415.91" y2="247.32" stroke="url(#gmort)" stroke-width="0.55" /><line x1="420.96" y1="242.17" x2="420.98" y2="247.17" stroke="url(#gmort)" stroke-width="0.55" /><line x1="425.79" y1="242.21" x2="425.81" y2="247.03" stroke="url(#gmort)" stroke-width="0.55" /><line x1="331.30" y1="249.85" x2="331.30" y2="258.20" stroke="url(#gmort)" stroke-width="0.55" /><line x1="341.34" y1="249.55" x2="341.34" y2="257.53" stroke="url(#gmort)" stroke-width="0.55" /><line x1="350.71" y1="249.27" x2="350.71" y2="256.90" stroke="url(#gmort)" stroke-width="0.55" /><line x1="359.47" y1="249.01" x2="359.47" y2="256.31" stroke="url(#gmort)" stroke-width="0.55" /><line x1="367.67" y1="248.76" x2="367.68" y2="255.76" stroke="url(#gmort)" stroke-width="0.55" /><line x1="375.38" y1="248.53" x2="375.39" y2="255.24" stroke="url(#gmort)" stroke-width="0.55" /><line x1="382.63" y1="248.32" x2="382.64" y2="254.75" stroke="url(#gmort)" stroke-width="0.55" /><line x1="389.46" y1="248.11" x2="389.48" y2="254.29" stroke="url(#gmort)" stroke-width="0.55" /><line x1="395.92" y1="247.92" x2="395.93" y2="253.86" stroke="url(#gmort)" stroke-width="0.55" /><line x1="402.02" y1="247.74" x2="402.03" y2="253.45" stroke="url(#gmort)" stroke-width="0.55" /><line x1="407.79" y1="247.57" x2="407.81" y2="253.06" stroke="url(#gmort)" stroke-width="0.55" /><line x1="413.27" y1="247.40" x2="413.29" y2="252.69" stroke="url(#gmort)" stroke-width="0.55" /><line x1="418.48" y1="247.25" x2="418.49" y2="252.34" stroke="url(#gmort)" stroke-width="0.55" /><line x1="423.42" y1="247.10" x2="423.44" y2="252.01" stroke="url(#gmort)" stroke-width="0.55" /><line x1="428.14" y1="246.96" x2="428.16" y2="251.69" stroke="url(#gmort)" stroke-width="0.55" /><line x1="336.41" y1="257.86" x2="336.41" y2="266.02" stroke="url(#gmort)" stroke-width="0.55" /><line x1="346.11" y1="257.21" x2="346.11" y2="265.01" stroke="url(#gmort)" stroke-width="0.55" /><line x1="355.16" y1="256.60" x2="355.17" y2="264.06" stroke="url(#gmort)" stroke-width="0.55" /><line x1="363.64" y1="256.03" x2="363.65" y2="263.17" stroke="url(#gmort)" stroke-width="0.55" /><line x1="371.60" y1="255.50" x2="371.60" y2="262.34" stroke="url(#gmort)" stroke-width="0.55" /><line x1="379.07" y1="254.99" x2="379.08" y2="261.56" stroke="url(#gmort)" stroke-width="0.55" /><line x1="386.11" y1="254.52" x2="386.12" y2="260.82" stroke="url(#gmort)" stroke-width="0.55" /><line x1="392.75" y1="254.07" x2="392.76" y2="260.13" stroke="url(#gmort)" stroke-width="0.55" /><line x1="399.02" y1="253.65" x2="399.03" y2="259.47" stroke="url(#gmort)" stroke-width="0.55" /><line x1="404.96" y1="253.25" x2="404.97" y2="258.85" stroke="url(#gmort)" stroke-width="0.55" /><line x1="410.58" y1="252.87" x2="410.60" y2="258.26" stroke="url(#gmort)" stroke-width="0.55" /><line x1="415.92" y1="252.51" x2="415.94" y2="257.70" stroke="url(#gmort)" stroke-width="0.55" /><line x1="421.00" y1="252.17" x2="421.02" y2="257.17" stroke="url(#gmort)" stroke-width="0.55" /><line x1="425.83" y1="251.85" x2="425.85" y2="256.67" stroke="url(#gmort)" stroke-width="0.55" /><line x1="331.30" y1="266.56" x2="331.30" y2="274.91" stroke="url(#gmort)" stroke-width="0.55" /><line x1="341.35" y1="265.51" x2="341.35" y2="273.49" stroke="url(#gmort)" stroke-width="0.55" /><line x1="350.72" y1="264.53" x2="350.72" y2="272.16" stroke="url(#gmort)" stroke-width="0.55" /><line x1="359.48" y1="263.61" x2="359.48" y2="270.91" stroke="url(#gmort)" stroke-width="0.55" /><line x1="367.69" y1="262.75" x2="367.70" y2="269.75" stroke="url(#gmort)" stroke-width="0.55" /><line x1="375.40" y1="261.95" x2="375.41" y2="268.65" stroke="url(#gmort)" stroke-width="0.55" /><line x1="382.65" y1="261.19" x2="382.66" y2="267.62" stroke="url(#gmort)" stroke-width="0.55" /><line x1="389.49" y1="260.47" x2="389.50" y2="266.65" stroke="url(#gmort)" stroke-width="0.55" /><line x1="395.94" y1="259.80" x2="395.95" y2="265.73" stroke="url(#gmort)" stroke-width="0.55" /><line x1="402.04" y1="259.16" x2="402.06" y2="264.87" stroke="url(#gmort)" stroke-width="0.55" /><line x1="407.82" y1="258.55" x2="407.84" y2="264.05" stroke="url(#gmort)" stroke-width="0.55" /><line x1="413.30" y1="257.98" x2="413.32" y2="263.27" stroke="url(#gmort)" stroke-width="0.55" /><line x1="418.51" y1="257.44" x2="418.53" y2="262.53" stroke="url(#gmort)" stroke-width="0.55" /><line x1="423.46" y1="256.92" x2="423.48" y2="261.83" stroke="url(#gmort)" stroke-width="0.55" /><line x1="428.17" y1="256.42" x2="428.19" y2="261.16" stroke="url(#gmort)" stroke-width="0.55" /><line x1="336.41" y1="274.19" x2="336.42" y2="282.35" stroke="url(#gmort)" stroke-width="0.55" /><line x1="346.11" y1="272.81" x2="346.12" y2="280.61" stroke="url(#gmort)" stroke-width="0.55" /><line x1="355.18" y1="271.52" x2="355.18" y2="278.99" stroke="url(#gmort)" stroke-width="0.55" /><line x1="363.66" y1="270.32" x2="363.66" y2="277.46" stroke="url(#gmort)" stroke-width="0.55" /><line x1="371.61" y1="269.19" x2="371.62" y2="276.04" stroke="url(#gmort)" stroke-width="0.55" /><line x1="379.09" y1="268.13" x2="379.10" y2="274.70" stroke="url(#gmort)" stroke-width="0.55" /><line x1="386.13" y1="267.13" x2="386.14" y2="273.43" stroke="url(#gmort)" stroke-width="0.55" /><line x1="392.77" y1="266.19" x2="392.78" y2="272.24" stroke="url(#gmort)" stroke-width="0.55" /><line x1="399.05" y1="265.29" x2="399.06" y2="271.12" stroke="url(#gmort)" stroke-width="0.55" /><line x1="404.99" y1="264.45" x2="405.00" y2="270.05" stroke="url(#gmort)" stroke-width="0.55" /><line x1="410.62" y1="263.65" x2="410.63" y2="269.04" stroke="url(#gmort)" stroke-width="0.55" /><line x1="415.96" y1="262.89" x2="415.97" y2="268.08" stroke="url(#gmort)" stroke-width="0.55" /><line x1="421.03" y1="262.17" x2="421.05" y2="267.17" stroke="url(#gmort)" stroke-width="0.55" /><line x1="425.86" y1="261.49" x2="425.88" y2="266.31" stroke="url(#gmort)" stroke-width="0.55" /><line x1="331.30" y1="283.27" x2="331.30" y2="291.62" stroke="url(#gmort)" stroke-width="0.55" /><line x1="341.35" y1="281.47" x2="341.35" y2="289.45" stroke="url(#gmort)" stroke-width="0.55" /><line x1="350.73" y1="279.79" x2="350.73" y2="287.41" stroke="url(#gmort)" stroke-width="0.55" /><line x1="359.49" y1="278.21" x2="359.50" y2="285.51" stroke="url(#gmort)" stroke-width="0.55" /><line x1="367.70" y1="276.74" x2="367.71" y2="283.73" stroke="url(#gmort)" stroke-width="0.55" /><line x1="375.42" y1="275.36" x2="375.43" y2="282.06" stroke="url(#gmort)" stroke-width="0.55" /><line x1="382.67" y1="274.06" x2="382.68" y2="280.49" stroke="url(#gmort)" stroke-width="0.55" /><line x1="389.51" y1="272.83" x2="389.52" y2="279.01" stroke="url(#gmort)" stroke-width="0.55" /><line x1="395.97" y1="271.67" x2="395.98" y2="277.61" stroke="url(#gmort)" stroke-width="0.55" /><line x1="402.07" y1="270.58" x2="402.09" y2="276.29" stroke="url(#gmort)" stroke-width="0.55" /><line x1="407.85" y1="269.54" x2="407.87" y2="275.03" stroke="url(#gmort)" stroke-width="0.55" /><line x1="413.34" y1="268.56" x2="413.35" y2="273.84" stroke="url(#gmort)" stroke-width="0.55" /><line x1="418.54" y1="267.62" x2="418.56" y2="272.72" stroke="url(#gmort)" stroke-width="0.55" /><line x1="423.50" y1="266.73" x2="423.52" y2="271.64" stroke="url(#gmort)" stroke-width="0.55" /><line x1="428.21" y1="265.89" x2="428.23" y2="270.62" stroke="url(#gmort)" stroke-width="0.55" /><line x1="336.42" y1="290.52" x2="336.42" y2="298.68" stroke="url(#gmort)" stroke-width="0.55" /><line x1="346.12" y1="288.41" x2="346.13" y2="296.21" stroke="url(#gmort)" stroke-width="0.55" /><line x1="355.19" y1="286.45" x2="355.19" y2="293.91" stroke="url(#gmort)" stroke-width="0.55" /><line x1="363.67" y1="284.61" x2="363.68" y2="291.75" stroke="url(#gmort)" stroke-width="0.55" /><line x1="371.63" y1="282.89" x2="371.64" y2="289.73" stroke="url(#gmort)" stroke-width="0.55" /><line x1="379.11" y1="281.26" x2="379.12" y2="287.83" stroke="url(#gmort)" stroke-width="0.55" /><line x1="386.15" y1="279.74" x2="386.16" y2="286.04" stroke="url(#gmort)" stroke-width="0.55" /><line x1="392.80" y1="278.30" x2="392.81" y2="284.35" stroke="url(#gmort)" stroke-width="0.55" /><line x1="399.08" y1="276.94" x2="399.09" y2="282.76" stroke="url(#gmort)" stroke-width="0.55" /><line x1="405.02" y1="275.65" x2="405.03" y2="281.25" stroke="url(#gmort)" stroke-width="0.55" /><line x1="410.65" y1="274.43" x2="410.66" y2="279.82" stroke="url(#gmort)" stroke-width="0.55" /><line x1="415.99" y1="273.27" x2="416.01" y2="278.46" stroke="url(#gmort)" stroke-width="0.55" /><line x1="421.07" y1="272.17" x2="421.09" y2="277.17" stroke="url(#gmort)" stroke-width="0.55" /><line x1="425.90" y1="271.13" x2="425.92" y2="275.94" stroke="url(#gmort)" stroke-width="0.55" /><line x1="331.30" y1="299.98" x2="331.30" y2="308.33" stroke="url(#gmort)" stroke-width="0.55" /><line x1="341.36" y1="297.42" x2="341.36" y2="305.40" stroke="url(#gmort)" stroke-width="0.55" /><line x1="350.73" y1="295.04" x2="350.74" y2="302.67" stroke="url(#gmort)" stroke-width="0.55" /><line x1="359.50" y1="292.81" x2="359.51" y2="300.12" stroke="url(#gmort)" stroke-width="0.55" /><line x1="367.72" y1="290.73" x2="367.73" y2="297.72" stroke="url(#gmort)" stroke-width="0.55" /><line x1="375.44" y1="288.77" x2="375.44" y2="295.47" stroke="url(#gmort)" stroke-width="0.55" /><line x1="382.69" y1="286.92" x2="382.70" y2="293.36" stroke="url(#gmort)" stroke-width="0.55" /><line x1="389.53" y1="285.19" x2="389.55" y2="291.37" stroke="url(#gmort)" stroke-width="0.55" /><line x1="395.99" y1="283.55" x2="396.01" y2="289.48" stroke="url(#gmort)" stroke-width="0.55" /><line x1="402.10" y1="282.00" x2="402.11" y2="287.70" stroke="url(#gmort)" stroke-width="0.55" /><line x1="407.88" y1="280.53" x2="407.90" y2="286.02" stroke="url(#gmort)" stroke-width="0.55" /><line x1="413.37" y1="279.13" x2="413.39" y2="284.42" stroke="url(#gmort)" stroke-width="0.55" /><line x1="418.58" y1="277.81" x2="418.60" y2="282.90" stroke="url(#gmort)" stroke-width="0.55" /><line x1="423.53" y1="276.55" x2="423.55" y2="281.46" stroke="url(#gmort)" stroke-width="0.55" /><line x1="428.25" y1="275.35" x2="428.27" y2="280.09" stroke="url(#gmort)" stroke-width="0.55" /><line x1="336.42" y1="306.84" x2="336.42" y2="315.01" stroke="url(#gmort)" stroke-width="0.55" /><line x1="346.13" y1="304.01" x2="346.13" y2="311.81" stroke="url(#gmort)" stroke-width="0.55" /><line x1="355.20" y1="301.37" x2="355.20" y2="308.83" stroke="url(#gmort)" stroke-width="0.55" /><line x1="363.68" y1="298.90" x2="363.69" y2="306.04" stroke="url(#gmort)" stroke-width="0.55" /><line x1="371.65" y1="296.58" x2="371.65" y2="303.43" stroke="url(#gmort)" stroke-width="0.55" /><line x1="379.13" y1="294.40" x2="379.14" y2="300.97" stroke="url(#gmort)" stroke-width="0.55" /><line x1="386.18" y1="292.35" x2="386.19" y2="298.65" stroke="url(#gmort)" stroke-width="0.55" /><line x1="392.82" y1="290.41" x2="392.83" y2="296.47" stroke="url(#gmort)" stroke-width="0.55" /><line x1="399.10" y1="288.58" x2="399.12" y2="294.40" stroke="url(#gmort)" stroke-width="0.55" /><line x1="405.05" y1="286.85" x2="405.06" y2="292.45" stroke="url(#gmort)" stroke-width="0.55" /><line x1="410.68" y1="285.21" x2="410.69" y2="290.60" stroke="url(#gmort)" stroke-width="0.55" /><line x1="416.02" y1="283.65" x2="416.04" y2="288.84" stroke="url(#gmort)" stroke-width="0.55" /><line x1="421.10" y1="282.17" x2="421.12" y2="287.17" stroke="url(#gmort)" stroke-width="0.55" /><line x1="425.94" y1="280.76" x2="425.96" y2="285.58" stroke="url(#gmort)" stroke-width="0.55" /><line x1="331.31" y1="316.69" x2="331.31" y2="325.04" stroke="url(#gmort)" stroke-width="0.55" /><line x1="341.36" y1="313.38" x2="341.37" y2="321.36" stroke="url(#gmort)" stroke-width="0.55" /><line x1="350.74" y1="310.30" x2="350.75" y2="317.93" stroke="url(#gmort)" stroke-width="0.55" /><line x1="359.52" y1="307.42" x2="359.52" y2="314.72" stroke="url(#gmort)" stroke-width="0.55" /><line x1="367.74" y1="304.72" x2="367.74" y2="311.71" stroke="url(#gmort)" stroke-width="0.55" /><line x1="375.45" y1="302.18" x2="375.46" y2="308.88" stroke="url(#gmort)" stroke-width="0.55" /><line x1="382.72" y1="299.79" x2="382.73" y2="306.23" stroke="url(#gmort)" stroke-width="0.55" /><line x1="389.56" y1="297.54" x2="389.57" y2="303.72" stroke="url(#gmort)" stroke-width="0.55" /><line x1="396.02" y1="295.42" x2="396.03" y2="301.36" stroke="url(#gmort)" stroke-width="0.55" /><line x1="402.13" y1="293.41" x2="402.14" y2="299.12" stroke="url(#gmort)" stroke-width="0.55" /><line x1="407.91" y1="291.51" x2="407.93" y2="297.01" stroke="url(#gmort)" stroke-width="0.55" /><line x1="413.40" y1="289.71" x2="413.42" y2="295.00" stroke="url(#gmort)" stroke-width="0.55" /><line x1="418.61" y1="288.00" x2="418.63" y2="293.09" stroke="url(#gmort)" stroke-width="0.55" /><line x1="423.57" y1="286.37" x2="423.59" y2="291.28" stroke="url(#gmort)" stroke-width="0.55" /><line x1="428.29" y1="284.82" x2="428.31" y2="289.55" stroke="url(#gmort)" stroke-width="0.55" /><line x1="336.42" y1="323.17" x2="336.43" y2="331.33" stroke="url(#gmort)" stroke-width="0.55" /><line x1="346.14" y1="319.62" x2="346.14" y2="327.42" stroke="url(#gmort)" stroke-width="0.55" /><line x1="355.21" y1="316.30" x2="355.21" y2="323.76" stroke="url(#gmort)" stroke-width="0.55" /><line x1="363.70" y1="313.19" x2="363.71" y2="320.33" stroke="url(#gmort)" stroke-width="0.55" /><line x1="371.66" y1="310.28" x2="371.67" y2="317.12" stroke="url(#gmort)" stroke-width="0.55" /><line x1="379.15" y1="307.54" x2="379.16" y2="314.10" stroke="url(#gmort)" stroke-width="0.55" /><line x1="386.20" y1="304.96" x2="386.21" y2="311.26" stroke="url(#gmort)" stroke-width="0.55" /><line x1="392.85" y1="302.52" x2="392.86" y2="308.58" stroke="url(#gmort)" stroke-width="0.55" /><line x1="399.13" y1="300.23" x2="399.14" y2="306.05" stroke="url(#gmort)" stroke-width="0.55" /><line x1="405.08" y1="298.05" x2="405.09" y2="303.65" stroke="url(#gmort)" stroke-width="0.55" /><line x1="410.71" y1="295.99" x2="410.73" y2="301.38" stroke="url(#gmort)" stroke-width="0.55" /><line x1="416.06" y1="294.03" x2="416.07" y2="299.22" stroke="url(#gmort)" stroke-width="0.55" /><line x1="421.14" y1="292.17" x2="421.16" y2="297.17" stroke="url(#gmort)" stroke-width="0.55" /><line x1="425.98" y1="290.40" x2="425.99" y2="295.22" stroke="url(#gmort)" stroke-width="0.55" /><line x1="331.31" y1="333.40" x2="331.31" y2="341.75" stroke="url(#gmort)" stroke-width="0.55" /><line x1="341.37" y1="329.34" x2="341.37" y2="337.32" stroke="url(#gmort)" stroke-width="0.55" /><line x1="350.75" y1="325.56" x2="350.76" y2="333.18" stroke="url(#gmort)" stroke-width="0.55" /><line x1="359.53" y1="322.02" x2="359.53" y2="329.32" stroke="url(#gmort)" stroke-width="0.55" /><line x1="367.75" y1="318.70" x2="367.76" y2="325.70" stroke="url(#gmort)" stroke-width="0.55" /><line x1="375.47" y1="315.59" x2="375.48" y2="322.30" stroke="url(#gmort)" stroke-width="0.55" /><line x1="382.74" y1="312.66" x2="382.75" y2="319.10" stroke="url(#gmort)" stroke-width="0.55" /><line x1="389.58" y1="309.90" x2="389.59" y2="316.08" stroke="url(#gmort)" stroke-width="0.55" /><line x1="396.05" y1="307.30" x2="396.06" y2="313.23" stroke="url(#gmort)" stroke-width="0.55" /><line x1="402.16" y1="304.83" x2="402.17" y2="310.54" stroke="url(#gmort)" stroke-width="0.55" /><line x1="407.95" y1="302.50" x2="407.96" y2="307.99" stroke="url(#gmort)" stroke-width="0.55" /><line x1="413.43" y1="300.29" x2="413.45" y2="305.57" stroke="url(#gmort)" stroke-width="0.55" /><line x1="418.65" y1="298.18" x2="418.67" y2="303.28" stroke="url(#gmort)" stroke-width="0.55" /><line x1="423.61" y1="296.18" x2="423.62" y2="301.09" stroke="url(#gmort)" stroke-width="0.55" /><line x1="428.33" y1="294.28" x2="428.35" y2="299.01" stroke="url(#gmort)" stroke-width="0.55" /><line x1="336.43" y1="339.50" x2="336.43" y2="347.66" stroke="url(#gmort)" stroke-width="0.55" /><line x1="346.14" y1="335.22" x2="346.15" y2="343.02" stroke="url(#gmort)" stroke-width="0.55" /><line x1="355.22" y1="331.22" x2="355.22" y2="338.68" stroke="url(#gmort)" stroke-width="0.55" /><line x1="363.71" y1="327.48" x2="363.72" y2="334.62" stroke="url(#gmort)" stroke-width="0.55" /><line x1="371.68" y1="323.97" x2="371.69" y2="330.82" stroke="url(#gmort)" stroke-width="0.55" /><line x1="379.17" y1="320.67" x2="379.18" y2="327.24" stroke="url(#gmort)" stroke-width="0.55" /><line x1="386.22" y1="317.57" x2="386.23" y2="323.87" stroke="url(#gmort)" stroke-width="0.55" /><line x1="392.87" y1="314.64" x2="392.88" y2="320.69" stroke="url(#gmort)" stroke-width="0.55" /><line x1="399.16" y1="311.87" x2="399.17" y2="317.69" stroke="url(#gmort)" stroke-width="0.55" /><line x1="405.10" y1="309.25" x2="405.12" y2="314.85" stroke="url(#gmort)" stroke-width="0.55" /><line x1="410.74" y1="306.77" x2="410.76" y2="312.16" stroke="url(#gmort)" stroke-width="0.55" /><line x1="416.09" y1="304.41" x2="416.11" y2="309.60" stroke="url(#gmort)" stroke-width="0.55" /><line x1="421.18" y1="302.17" x2="421.19" y2="307.17" stroke="url(#gmort)" stroke-width="0.55" /><line x1="426.01" y1="300.04" x2="426.03" y2="304.86" stroke="url(#gmort)" stroke-width="0.55" /><line x1="331.31" y1="350.11" x2="331.31" y2="358.46" stroke="url(#gmort)" stroke-width="0.55" /><line x1="341.37" y1="345.30" x2="341.38" y2="353.28" stroke="url(#gmort)" stroke-width="0.55" /><line x1="350.76" y1="340.81" x2="350.77" y2="348.44" stroke="url(#gmort)" stroke-width="0.55" /><line x1="359.54" y1="336.62" x2="359.55" y2="343.92" stroke="url(#gmort)" stroke-width="0.55" /><line x1="367.77" y1="332.69" x2="367.77" y2="339.69" stroke="url(#gmort)" stroke-width="0.55" /><line x1="375.49" y1="329.00" x2="375.50" y2="335.71" stroke="url(#gmort)" stroke-width="0.55" /><line x1="382.76" y1="325.53" x2="382.77" y2="331.97" stroke="url(#gmort)" stroke-width="0.55" /><line x1="389.61" y1="322.26" x2="389.62" y2="328.44" stroke="url(#gmort)" stroke-width="0.55" /><line x1="396.07" y1="319.17" x2="396.08" y2="325.11" stroke="url(#gmort)" stroke-width="0.55" /><line x1="402.19" y1="316.25" x2="402.20" y2="321.96" stroke="url(#gmort)" stroke-width="0.55" /><line x1="407.98" y1="313.49" x2="407.99" y2="318.98" stroke="url(#gmort)" stroke-width="0.55" /><line x1="413.47" y1="310.86" x2="413.48" y2="316.15" stroke="url(#gmort)" stroke-width="0.55" /><line x1="418.68" y1="308.37" x2="418.70" y2="313.46" stroke="url(#gmort)" stroke-width="0.55" /><line x1="423.64" y1="306.00" x2="423.66" y2="310.91" stroke="url(#gmort)" stroke-width="0.55" /><line x1="428.36" y1="303.75" x2="428.38" y2="308.48" stroke="url(#gmort)" stroke-width="0.55" /><line x1="336.43" y1="355.82" x2="336.43" y2="363.99" stroke="url(#gmort)" stroke-width="0.55" /><line x1="346.15" y1="350.82" x2="346.16" y2="358.62" stroke="url(#gmort)" stroke-width="0.55" /><line x1="355.23" y1="346.14" x2="355.24" y2="353.61" stroke="url(#gmort)" stroke-width="0.55" /><line x1="363.73" y1="341.77" x2="363.73" y2="348.91" stroke="url(#gmort)" stroke-width="0.55" /><line x1="371.70" y1="337.67" x2="371.71" y2="344.51" stroke="url(#gmort)" stroke-width="0.55" /><line x1="379.19" y1="333.81" x2="379.20" y2="340.38" stroke="url(#gmort)" stroke-width="0.55" /><line x1="386.24" y1="330.18" x2="386.25" y2="336.48" stroke="url(#gmort)" stroke-width="0.55" /><line x1="392.90" y1="326.75" x2="392.91" y2="332.81" stroke="url(#gmort)" stroke-width="0.55" /><line x1="399.18" y1="323.51" x2="399.20" y2="329.33" stroke="url(#gmort)" stroke-width="0.55" /><line x1="405.13" y1="320.45" x2="405.15" y2="326.05" stroke="url(#gmort)" stroke-width="0.55" /><line x1="410.77" y1="317.55" x2="410.79" y2="322.94" stroke="url(#gmort)" stroke-width="0.55" /><line x1="416.12" y1="314.79" x2="416.14" y2="319.98" stroke="url(#gmort)" stroke-width="0.55" /><line x1="421.21" y1="312.17" x2="421.23" y2="317.17" stroke="url(#gmort)" stroke-width="0.55" /><line x1="426.05" y1="309.68" x2="426.07" y2="314.50" stroke="url(#gmort)" stroke-width="0.55" /><line x1="331.31" y1="366.81" x2="331.31" y2="375.17" stroke="url(#gmort)" stroke-width="0.55" /><line x1="341.38" y1="361.26" x2="341.38" y2="369.24" stroke="url(#gmort)" stroke-width="0.55" /><line x1="350.77" y1="356.07" x2="350.78" y2="363.70" stroke="url(#gmort)" stroke-width="0.55" /><line x1="359.55" y1="351.22" x2="359.56" y2="358.52" stroke="url(#gmort)" stroke-width="0.55" /><line x1="367.78" y1="346.68" x2="367.79" y2="353.67" stroke="url(#gmort)" stroke-width="0.55" /><line x1="375.51" y1="342.41" x2="375.52" y2="349.12" stroke="url(#gmort)" stroke-width="0.55" /><line x1="382.78" y1="338.40" x2="382.79" y2="344.83" stroke="url(#gmort)" stroke-width="0.55" /><line x1="389.63" y1="334.62" x2="389.64" y2="340.80" stroke="url(#gmort)" stroke-width="0.55" /><line x1="396.10" y1="331.05" x2="396.11" y2="336.98" stroke="url(#gmort)" stroke-width="0.55" /><line x1="402.21" y1="327.67" x2="402.23" y2="333.38" stroke="url(#gmort)" stroke-width="0.55" /><line x1="408.01" y1="324.47" x2="408.02" y2="329.96" stroke="url(#gmort)" stroke-width="0.55" /><line x1="413.50" y1="321.44" x2="413.52" y2="326.73" stroke="url(#gmort)" stroke-width="0.55" /><line x1="418.72" y1="318.56" x2="418.73" y2="323.65" stroke="url(#gmort)" stroke-width="0.55" /><line x1="423.68" y1="315.82" x2="423.70" y2="320.73" stroke="url(#gmort)" stroke-width="0.55" /><line x1="428.40" y1="313.21" x2="428.42" y2="317.94" stroke="url(#gmort)" stroke-width="0.55" /><line x1="326.00" y1="70.40" x2="430.00" y2="149.30" stroke="#3a1c1a" stroke-width="0.7" /><line x1="326.00" y1="70.40" x2="326.00" y2="378.30" stroke="#8a3a30" stroke-width="0.5" /><polygon points="329.30,159.50 369.40,155.30 369.40,309.00 329.30,321.00" fill="#4060d0" opacity="0.10"/><polyline points="289.30,119.60 369.40,155.30 369.40,309.00 289.30,338.80" fill="none" stroke="#3d6fe0" stroke-width="0.75" opacity="0.7"/><polyline points="289.30,125.60 358.00,156.20 358.00,312.00 289.30,333.50" fill="none" stroke="#3d6fe0" stroke-width="0.6" opacity="0.7"/><polyline points="289.30,130.50 351.90,158.00 351.90,314.00 289.30,330.00" fill="none" stroke="#3d6fe0" stroke-width="0.6" opacity="0.7"/><polyline points="289.30,142.20 345.70,157.50 345.70,316.00 289.30,324.00" fill="none" stroke="#3d6fe0" stroke-width="0.5" opacity="0.7"/><polyline points="289.30,147.00 329.30,159.50 329.30,321.00 289.30,318.90" fill="none" stroke="#3d6fe0" stroke-width="0.6" opacity="0.7"/><line x1="329.30" y1="159.50" x2="369.40" y2="155.30" stroke="#3d6fe0" stroke-width="0.5" opacity="0.7"/><line x1="329.30" y1="321.00" x2="369.40" y2="309.00" stroke="#3d6fe0" stroke-width="0.5" opacity="0.7"/><line x1="289.30" y1="317.50" x2="355.50" y2="299.50" stroke="#3d6fe0" stroke-width="0.75" opacity="0.7"/><line x1="289.30" y1="329.80" x2="369.20" y2="307.50" stroke="#3d6fe0" stroke-width="0.75" opacity="0.7"/><line x1="289.30" y1="326.00" x2="345.70" y2="310.50" stroke="#3d6fe0" stroke-width="0.5" opacity="0.7"/><line x1="233.00" y1="360.30" x2="289.30" y2="338.80" stroke="#3a74dc" stroke-width="0.9" /><line x1="216.00" y1="357.00" x2="289.30" y2="333.50" stroke="#3a74dc" stroke-width="0.6" opacity="0.7"/><line x1="206.50" y1="354.70" x2="289.30" y2="330.00" stroke="#3a74dc" stroke-width="0.6" opacity="0.7"/><line x1="179.50" y1="349.00" x2="289.30" y2="318.90" stroke="#3a74dc" stroke-width="0.6" opacity="0.7"/><line x1="233.00" y1="94.00" x2="289.30" y2="119.60" stroke="#3a74dc" stroke-width="1.0" /><line x1="216.00" y1="98.00" x2="289.30" y2="125.60" stroke="#3a74dc" stroke-width="0.6" opacity="0.7"/><line x1="206.80" y1="100.00" x2="289.30" y2="130.50" stroke="#3a74dc" stroke-width="0.6" opacity="0.7"/><line x1="179.70" y1="107.50" x2="289.30" y2="146.00" stroke="#3a74dc" stroke-width="0.6" opacity="0.7"/><polyline points="289.00,191.50 337.40,186.90 361.10,193.00 380.60,197.80" fill="none" stroke="#26c026" stroke-width="1.15" /><line x1="337.40" y1="186.90" x2="337.60" y2="300.00" stroke="#26c026" stroke-width="1.15" /><line x1="380.60" y1="197.80" x2="380.60" y2="289.30" stroke="#26c026" stroke-width="1.15" /><polyline points="289.00,296.00 337.60,300.00 380.60,289.30" fill="none" stroke="#26c026" stroke-width="1.15" /><polyline points="289.00,206.50 312.00,204.00 380.60,197.80" fill="none" stroke="#26c026" stroke-width="0.6" opacity="0.6"/><polyline points="289.00,283.00 312.00,285.00 380.60,289.30" fill="none" stroke="#26c026" stroke-width="0.6" opacity="0.6"/><circle cx="136.4" cy="203.3" r="1.05" fill="#111"/><circle cx="170.2" cy="206.4" r="1.05" fill="#111"/><circle cx="198.7" cy="209.3" r="1.05" fill="#111"/><circle cx="204.2" cy="197.4" r="1.05" fill="#111"/><circle cx="235.7" cy="201.8" r="1.05" fill="#111"/><circle cx="262.2" cy="205.2" r="1.05" fill="#111"/><circle cx="136.0" cy="283.5" r="1.05" fill="#111"/><circle cx="198.1" cy="277.0" r="1.05" fill="#111"/><circle cx="203.9" cy="289.1" r="1.05" fill="#111"/><circle cx="337.4" cy="186.9" r="1.05" fill="#111"/><circle cx="361.1" cy="193" r="1.05" fill="#111"/><circle cx="380.6" cy="197.8" r="1.05" fill="#111"/><circle cx="337.6" cy="300" r="1.05" fill="#111"/><circle cx="380.6" cy="289.3" r="1.05" fill="#111"/><rect x="316.6" y="56.2" width="1.8" height="0.9" fill="#f0a050"/><rect x="316.6" y="415" width="1.8" height="0.9" fill="#f0a050"/><rect x="319.6" y="56.2" width="1.8" height="0.9" fill="#f0a050"/><rect x="319.6" y="415" width="1.8" height="0.9" fill="#f0a050"/><rect x="322.6" y="56.2" width="1.8" height="0.9" fill="#f0a050"/><rect x="322.6" y="415" width="1.8" height="0.9" fill="#f0a050"/><rect x="325.6" y="56.2" width="1.8" height="0.9" fill="#f0a050"/><rect x="325.6" y="415" width="1.8" height="0.9" fill="#f0a050"/></svg><div class="b" style="z-index:4;left:258.9px;top:267.8px;width:6.8px;height:7.1px;background:#6b97e6;border:0.5px solid #4a78d8"></div><div class="b" style="z-index:4;left:258.9px;top:276px;width:52.8px;height:19.7px;background:rgba(255,255,255,0.95)"></div><div class="b" style="z-index:4;left:305.6px;top:276.2px;width:5.8px;height:6.8px;background:#84acf0"></div><div class="t" style="z-index:5;left:264.9px;top:276.9px;font-size:4.55px;color:#2d5ee0;font-weight:bold">Cut Elements</div><div class="t" style="z-index:5;left:264.9px;top:284.2px;font-size:4.65px;color:#2f62e0">Cuts SW - 013</div><div class="t" style="z-index:5;left:264.9px;top:290.9px;font-size:4.65px;color:#2f62e0">Cuts SW - 014</div><svg width="700" height="438" style="z-index:6"><path d="M308.6 278.6l0 4.8 1.1-1 0.9 1.9 0.7-0.3-0.9-1.8 1.6-0.1z" fill="#111" stroke="#fff" stroke-width="0.3"/><path d="M260.2 277.6h2.6l0.5 0.6h-3.1zM260.2 278.4h3v1.5h-3z" fill="#3a6ad8"/><path d="M261 270.2h3.6v3.2h-3.6z M261.6 271.8h2" fill="none" stroke="#fff" stroke-width="0.5"/><path d="M302.6 290.4v3.2M301.7 292.2l0.9 1.6 0.9-1.6M301.8 290.4h1.6" fill="none" stroke="#5a7ad0" stroke-width="0.55"/></svg>
<svg width="700" height="438" style="z-index:8"><path d="M11.9 2.3c.4-.5.6-1 .55-1.5-.5 0-1 .3-1.35.7-.3.4-.5.9-.5 1.4.5 0 1-.2 1.3-.6zM13.9 6.1c-.3.6-.6 1.2-1.1 1.2-.4 0-.6-.3-1.1-.3s-.7.3-1.1.3c-.5 0-.9-.6-1.2-1.1-.6-1-.6-2.3-.2-2.9.3-.5.8-.8 1.3-.8s.8.3 1.2.3.6-.3 1.2-.3c.4 0 .9.2 1.2.6-1 .6-.9 2.1.1 2.6z" fill="#111"/><rect x="548" y="2.6" width="7.6" height="4" rx="0.8" fill="#333"/><rect x="555.8" y="3.8" width="0.9" height="1.6" fill="#333"/><rect x="564" y="1.8" width="6" height="5.8" rx="0.8" fill="#333"/><path d="M565.6 6.5l1.4-3.8 1.4 3.8M566.1 5.3h1.8" stroke="#fff" stroke-width="0.6" fill="none"/><g fill="none" stroke="#333" stroke-width="0.8"><circle cx="673" cy="4" r="1.9"/><line x1="674.3" y1="5.4" x2="676" y2="7.1"/><path d="M684 2h1M684 4h1M684 6h1M686 2h4M686 4h4M686 6h4"/></g><circle cx="449.5" cy="4.3" r="2.3" fill="#444"/><circle cx="451.8" cy="6" r="1.3" fill="#e02020"/><path d="M459.8 3.6l2.3-1.5 2.3 1.5-0.9 3-2.4 1-2-1.4z" fill="#555"/><circle cx="462" cy="4.6" r="0.8" fill="#e2e2e2"/><path d="M470.5 2h5.6v3.5c0 1.3-1.3 2.3-2.8 2.8-1.45-.5-2.8-1.5-2.8-2.8z" fill="#444"/><rect x="471.8" y="3.2" width="3" height="1" fill="#e2e2e2"/><path d="M482.5 1.8h6v3.8c0 1.3-1.4 2.3-3 2.8-1.6-.5-3-1.5-3-2.8z" fill="#333"/><path d="M484.4 3.2h2.2v1.3h-2.2v1.3h2.2" stroke="#e2e2e2" stroke-width="0.5" fill="none"/><rect x="494.6" y="2" width="7.4" height="4.4" fill="none" stroke="#333" stroke-width="0.7"/><path d="M496.6 8h3.6l-1.8-2.2z" fill="#333"/><path d="M507.6 3.3q3.8-3.2 7.6 0l-3.8 4.3z" fill="none" stroke="#333" stroke-width="0.7"/><path d="M520.4 3.4h1.2l1.8-1.5v5l-1.8-1.5h-1.2z" fill="#333"/><path d="M329.6 11.6h2.6l1 1v3.6h-3.6z" fill="#fff" stroke="#88a" stroke-width="0.4"/><rect x="330.2" y="12.2" width="1.2" height="1.4" fill="#4aa0e0"/><g fill="none" stroke="#444" stroke-width="0.6"><path d="M7 38.2l2-1.2 2.4-1.8 1.8-0.8M7.6 36.4l2.2-1.6M10.8 34.6l1.8 1.2v1.8" stroke="#555" stroke-width="1.1"/><path d="M24.4 34.6h5.2M24.4 38.6h6.4" stroke="#777" stroke-width="0.5" stroke-dasharray="0.8 0.4"/><path d="M18.2 35.4l1.1 1.2-1.1 1.2M35.4 35.4l1.1 1.2-1.1 1.2M74.2 33.6l1.1 1.3-1.1 1.3" stroke="#333" stroke-width="0.85"/><circle cx="48" cy="37" r="2.1" stroke="#555" stroke-width="0.8"/><circle cx="48" cy="34.6" r="0.9" fill="#444" stroke="none"/></g><path d="M30.2 34.2l1.6 1.8-.7.1.6 1.1-.45.25-.6-1.1-.6.5z" fill="#222"/><path d="M63.5 31.8l0 5.6 1.4-1.3 1 2.2 0.8-.4-1-2.1 1.9-.1z" fill="#555"/><g stroke="#555" fill="none" stroke-linecap="round"><path d="M86.4 38.2L94 31.2" stroke-width="1.7"/><path d="M86.6 31.4L93.6 38" stroke-width="1.2"/><g stroke="#888"><path d="M104.6 38.4L112.8 31" stroke-width="0.9"/><path d="M106.6 36.6L110.2 33.4" stroke-width="1.9"/><path d="M110.6 31.2l1.4 1.6M112.2 30.6l1 1.2" stroke-width="0.6"/></g><g stroke="#888"><path d="M122.8 38.4L131 31" stroke-width="0.9"/><path d="M124.6 36.8L128.6 33.2" stroke-width="1.9"/><path d="M128.6 31.4l1.6 1.6" stroke-width="0.6"/></g><g stroke="#888"><path d="M141 38.4L149.2 31" stroke-width="0.9"/><path d="M142.8 36.8L146.4 33.6" stroke-width="1.9"/><path d="M146.6 31.2l1.4 1.6M141.6 35.4l1.6 1.4" stroke-width="0.6"/></g></g><rect x="163.6" y="32.3" width="7.2" height="5.4" fill="none" stroke="#555" stroke-width="0.9"/><circle cx="185.6" cy="34.6" r="3.1" fill="none" stroke="#555" stroke-width="0.8"/><g fill="none" stroke="#555" stroke-width="0.7"><rect x="238.5" y="32.5" width="8" height="7.5"/><rect x="240" y="34" width="5" height="4.5"/><path d="M239.8 32.3v-3.5h2v3.5M243.2 32.3v-3.5h2v3.5M236.8 33v7.6M247.8 35.5v3.5l2 -1.75z"/><rect x="303.4" y="29.4" width="2.8" height="3.8" rx="0.6"/><rect x="303.4" y="37.2" width="2.8" height="3.8" rx="0.6"/></g><g fill="none" stroke="#555" stroke-width="0.7"><rect x="314.9" y="28.6" width="9" height="12.2"/><rect x="316.4" y="30" width="6" height="6.5"/><path d="M317.5 32.5v2.6h4v-2.6"/></g><path d="M327 30l1.6 1-1.6 1zM327 38.3l1.6 1-1.6 1z" fill="#333"/><circle cx="455.4" cy="29.4" r="2.4" fill="#cfcfcf"/><rect x="449.45" y="28.95" width="1.3" height="1.3" fill="#333"/><rect x="454.75" y="28.95" width="1.3" height="1.3" fill="#333"/><rect x="459.95" y="28.95" width="1.3" height="1.3" fill="#333"/><rect x="449.45" y="34.05" width="1.3" height="1.3" fill="#333"/><rect x="454.75" y="34.05" width="1.3" height="1.3" fill="#333"/><rect x="459.95" y="34.05" width="1.3" height="1.3" fill="#333"/><rect x="449.45" y="39.25" width="1.3" height="1.3" fill="#333"/><rect x="454.75" y="39.25" width="1.3" height="1.3" fill="#333"/><rect x="459.95" y="39.25" width="1.3" height="1.3" fill="#333"/><rect x="471.3" y="32.1" width="6.4" height="5.6" fill="#4a4a4a"/><rect x="472.9" y="33.5" width="3.2" height="2.8" fill="#fff"/><path d="M536.6 33.7l1 1.1-1 1.1" fill="none" stroke="#333" stroke-width="0.7"/><g fill="none" stroke="#555" stroke-width="0.8" stroke-linejoin="round"><path d="M549.4 33.4h1.6l0.6-1.2h2.8l0.6 1.2h1.6v3h-1.6l-0.6 1.2h-2.8l-0.6-1.2h-1.6z" stroke-width="0.9"/><path d="M568.6 31.2v7.4" stroke="#888" stroke-width="1.2"/><path d="M569.8 32.2h1.8l1 1.4h1.2l0.8 1.4-0.8 1.4h-1.2l-1 1.4h-1.8" stroke="#777"/><path d="M587.2 31.2v7.4" stroke="#444" stroke-width="1.3"/><path d="M588.4 32.2h1.6l1 1.4h1l0.8 1.4-0.8 1.4h-1l-1 1.4h-1.6" stroke="#444" stroke-width="0.9"/><path d="M603.8 38.2v-2.4l1.2-0.6v-1.6l2.8-2.4 2.8 2.4v1.6l1.2 0.6v2.4z" stroke="#555"/><path d="M607.8 34.6v3.6" stroke="#444" stroke-width="1.2"/></g><g fill="none" stroke="#555" stroke-width="0.75"><path d="M624.6 28.6v4.4M624.6 30.8h5.2"/><circle cx="632.8" cy="30.8" r="2.2"/><path d="M624.6 37v4.4M624.6 39.2h5.2"/><rect x="630.6" y="37" width="4.5" height="3.4"/><path d="M631.5 41.5h2.8"/></g><circle cx="700.5" cy="34.6" r="2.2" fill="none" stroke="#666" stroke-width="0.7"/><g fill="none" stroke="#555" stroke-width="0.7"><rect x="23.3" y="46.3" width="3.4" height="2.4" rx="0.6" stroke-width="0.9"/><rect x="27.9" y="46.3" width="3.4" height="2.4" rx="0.6" stroke-width="0.9"/><rect x="23.3" y="49.5" width="3.4" height="2.4" rx="0.6" stroke-width="0.9"/><rect x="27.9" y="49.5" width="3.4" height="2.4" rx="0.6" stroke-width="0.9"/><path d="M58.4 52v-5.8h2.4l1.2 1.6h3.2v4.2z" fill="#fff" stroke-width="0.8"/><path d="M157 52v-3.5h3.4v3.5M157.6 48.5v-2h2.2v2M156.2 52h5"/><path d="M257.3 47.2l2.6-1 3 0.8v4.6l-3 0.8-2.6-1z M259.9 46.5v5.9" /><path d="M339.5 46.2h6.6v5.8h-6.6z M341 47.5h3M341 49l2 1.5" /><path d="M446.3 47.2h1.4l0.6-0.9h2.2l0.6 0.9h1.5v4.6h-6.3z"/><circle cx="449.5" cy="49.4" r="1.3"/><path d="M533.3 51.8v-3.3l3.5-2.3 3.5 2.3v3.3z"/></g><circle cx="161.6" cy="46" r="0.9" fill="#e03030"/><g fill="none" stroke="#4a8ef0" stroke-width="0.8"><path d="M606 51.8v-4.2M607.5 51.8v-3l2.4-1.8 2.6 1.8v3M612.5 48.8l1.8-1.2 2.4 1.6v2.6h-4.2"/></g><path d="M619.4 48.4l1 1 1-1" fill="none" stroke="#555" stroke-width="0.6"/><g fill="#f0a860"><rect x="23" y="232.5" width="0.9" height="1.6"/><rect x="23" y="235.5" width="0.9" height="1.6"/><rect x="23" y="238.5" width="0.9" height="1.6"/><rect x="620.3" y="232.5" width="0.9" height="1.6"/><rect x="620.3" y="235.5" width="0.9" height="1.6"/><rect x="620.3" y="238.5" width="0.9" height="1.6"/></g><path d="M8.3 49.2v6.2l1.5-1.4 1.1 2.3 0.9-.4-1.1-2.3 2.1-.1z" fill="#555"/><rect x="6.2" y="61.2" width="8.2" height="6.2" fill="none" stroke="#666" stroke-width="0.8" stroke-dasharray="1.2 0.5"/><path d="M6.3 82.6l8.2-1.2-0.3 5.3-7.6 2z" fill="none" stroke="#4a4a4a" stroke-width="0.9" stroke-linejoin="round"/><path d="M8.6 92.7h3.2l-0.3 8-3.1 0.6z" fill="none" stroke="#4a4a4a" stroke-width="0.9" stroke-linejoin="round"/><path d="M6.8 104.8h6.6v7.4h-6.6zM6.8 108.5h6.6M10.1 104.8v7.4" fill="none" stroke="#4a4a4a" stroke-width="0.9" stroke-linejoin="round"/><path d="M6.8 116.6h6.6v6.4h-6.6zM10.1 116.6v6.4M6.8 120h3.3" fill="none" stroke="#4a4a4a" stroke-width="0.9" stroke-linejoin="round"/><path d="M8.6 127.5h2.6v8.6h-2.6z" fill="none" stroke="#4a4a4a" stroke-width="0.9" stroke-linejoin="round"/><path d="M5.8 141l8.6 2.6-0.3 1.6-8.4-2.8z" fill="none" stroke="#4a4a4a" stroke-width="0.9" stroke-linejoin="round"/><path d="M5.2 156.1l4.8-3.2 5.8 2.3-5.4 3.5z" fill="none" stroke="#4a4a4a" stroke-width="0.9" stroke-linejoin="round"/><path d="M6 164.2l3-2 5.6 4-3 2zM6.6 166.5l3-2 5 3.6" fill="none" stroke="#4a4a4a" stroke-width="0.9" stroke-linejoin="round"/><path d="M6.4 180l1.4-2.3 7-1.5-0.2 2M8 178.2v1.8M11 177.2v1.8M14 176.6v1.8" fill="none" stroke="#4a4a4a" stroke-width="0.9" stroke-linejoin="round"/><path d="M5 190.6l3.5-3.6 4.6 0.4 2.4 3-3.6-0.3-3.3 3.5z" fill="none" stroke="#4a4a4a" stroke-width="0.9" stroke-linejoin="round"/><path d="M5.6 200.2l3.6 4.6 5.8-5.6-0.6 2.6-5.2 3zM6 200.6l2.5-0.2" fill="none" stroke="#4a4a4a" stroke-width="0.9" stroke-linejoin="round"/><path d="M6 210.2l2.8-1.6 6.4 3.8-2.4 2z M7.2 211.5l6 3.4" fill="none" stroke="#4a4a4a" stroke-width="0.9" stroke-linejoin="round"/><path d="M6.8 220h6.6v7.8h-6.6zM6.8 222.6h6.6M6.8 225.2h6.6M10.1 220v7.8" fill="none" stroke="#4a4a4a" stroke-width="0.9" stroke-linejoin="round"/><path d="M6 240.8l2-5.4 3.2-1.6 2.6 3.8-4 4.2z" fill="none" stroke="#4a4a4a" stroke-width="0.9" stroke-linejoin="round"/><path d="M8.8 243.3h2.3v2.4h1.8v2.2h-1.8v2h-2.3v-2h-1.8v-2.2h1.8z" fill="none" stroke="#4a4a4a" stroke-width="0.9" stroke-linejoin="round"/><path d="M6.5 255.2h3v3h5v4h-4l-1-1.5h-3z" fill="none" stroke="#4a4a4a" stroke-width="0.9" stroke-linejoin="round"/><path d="M5.6 266.6l2.4 2.6 7 3.2-2 1.8-7-3.5zM7.6 269.4l5.6 2.6" fill="none" stroke="#4a4a4a" stroke-width="0.9" stroke-linejoin="round"/><path d="M7.2 297l2.9-7 2.9 7M8.3 294.8h3.6" fill="none" stroke="#999" stroke-width="0.8" stroke-linejoin="round"/><path d="M5.6 307l3.6-2.6M12 303v4.6M12.2 303l-1.4 1M14 303.2h1v3.8" fill="none" stroke="#555" stroke-width="0.7" stroke-linejoin="round"/><path d="M5.5 319.5l2.6-4.2h5l2 4.2z" fill="#aaa" stroke="#888" stroke-width="1.0" stroke-linejoin="round"/><path d="M6.4 332l7.4-7.6" fill="none" stroke="#666" stroke-width="0.8" stroke-linejoin="round"/><path d="M10.1 339.8m-3.6 0a3.6 3.6 0 1 0 7.2 0a3.6 3.6 0 1 0 -7.2 0" fill="none" stroke="#666" stroke-width="0.7" stroke-linejoin="round"/><path d="M5.6 355.4v-3l3.6-2.8h4.8l-2 2" fill="none" stroke="#666" stroke-width="0.7" stroke-linejoin="round"/><path d="M5.6 360h4.4l1.2 1.4h3v4.2h-8.6z M7 363h2.5" fill="none" stroke="#666" stroke-width="0.75" stroke-linejoin="round"/><path d="M5.4 374.2l1 0.8M7 375.2h6M13.5 375.2l1.2 1.4" fill="none" stroke="#555" stroke-width="0.7" stroke-linejoin="round"/><path d="M5 388h10M10 384.4l1.4 2H8.6z" fill="none" stroke="#555" stroke-width="0.7" stroke-linejoin="round"/><path d="M10.1 395v6M7 398h6.2" fill="none" stroke="#555" stroke-width="0.7" stroke-linejoin="round"/><path d="M6.2 407h7.4l1.6 2.4v3.2h-9z M8 412l3-3" fill="none" stroke="#777" stroke-width="0.7" stroke-linejoin="round"/><path d="M8 417.6h4" fill="none" stroke="#777" stroke-width="0.6" stroke-linejoin="round"/><path d="M122.2 422.3l1 1.2-1 1.2M178.2 422.3l1 1.2-1 1.2M233.3 422.3l1 1.2-1 1.2M288.5 422.3l1 1.2-1 1.2M344.5 422.3l1 1.2-1 1.2M454.9 422.3l1 1.2-1 1.2M510.8 422.3l1 1.2-1 1.2M566.9 422.3l1 1.2-1 1.2M621.5 422.3l1 1.2-1 1.2" fill="none" stroke="#444" stroke-width="0.7"/><g fill="none" stroke="#555" stroke-width="0.7"><circle cx="25.6" cy="423.4" r="2.3" stroke-width="0.85"/><path d="M21.2 423.4h3M23.9 425.1l-1.6 1.6" stroke-width="0.85"/><circle cx="34.6" cy="423.6" r="2.4" stroke="#bbb"/><path d="M37 423.6h1.5" stroke="#bbb"/><circle cx="43.6" cy="423.2" r="2.3"/><path d="M45.3 424.9l1.6 1.6M42.6 423.2h2"/><path d="M53.2 423.2q2.7-2.4 5.4 0q-2.7 2-5.4 0z" stroke-width="0.8"/><path d="M55.2 424.2l0.7 1.4 0.7-1.4z" fill="#555"/><circle cx="65.3" cy="421.9" r="0.7" fill="#555" stroke="none"/><path d="M65.3 422.8v2M64.3 426.4l1-1.6 1 1.6M64.2 423.6l1.1-.6 1.1.6" stroke-width="0.8"/><circle cx="76.4" cy="423.4" r="2.6" stroke-width="0.9"/><path d="M75 422l2.8 2.8M77.8 422l-2.8 2.8M78.4 425.4l1.4 1.4" stroke-width="0.8"/><path d="M131.8 425.5l1.5-3h2.2l1 1.6-1.4 1.4z" stroke="#aaa"/><rect x="185.8" y="422.3" width="6" height="2.8"/><path d="M186.8 423.7h4"/><path d="M242.5 422.2h3l1.2 1v2.4h-3.4l-.8-1z"/><path d="M500 0"/><path d="M354.6 421.6v2.6q0 1.2 1 1.2t1-1.2v-2.6M355.6 425.4v1.2"/><path d="M407 422h6.2v3.4h-6.2zM408 423.3h4.2"/><path d="M463.6 422.6h3.4v3.2h-3.4zM465 421.4h3.6v3.2"/><path d="M519 425.6l2.4-3.6 2.4 3.6z M521.4 424.2v1.4"/><path d="M574.5 422.4h3.4v3.2h-3.4zM576 421.4h2.8v2.6"/></g><rect x="296.8" y="421.8" width="5.2" height="3.8" fill="#555"/><path d="M297.8 423h3.2" stroke="#ddd" stroke-width="0.4"/><g fill="none" stroke="#4a4a4a" stroke-width="0.9"><path d="M631 51.6q1.2-.8 2.3 0t-.4 1.6v1.4M632.8 55.8v.6"/><path d="M634.4 57h1.5v2.4" stroke="#777"/><path d="M640.2 53.8l1 1.1-1 1.1"/><path d="M652.6 58.4v-3.6l2.8-2.2 2.6 2.2M655.4 58.4v-3h4.5v3z" stroke="#444"/><path d="M665 58.4v-5.4h2.4l1 1.2h3.4v4.2z"/><path d="M677.6 58.4v-5.4h2.4l1 1.2h3.4v4.2zM678.6 56h4.8"/><path d="M690 58.4v-4.6l1.4-1.4h3.2v6zM691.4 55h2.2v2.2"/></g><path d="M633.5 69.4v-3l2.6-2.2 2.6 2.2v3zM636.1 69.4v-2.4h4.4v2.4z" fill="none" stroke="#585858" stroke-width="0.8"/><path d="M628.9 65.9L631.6999999999999 65.9L630.3 68.2z" fill="#777"/><path d="M639.9 78.69999999999999v-5.2h2.2l0.9 1.1h3.6v4.1z" fill="none" stroke="#585858" stroke-width="0.8"/><path d="M634.6 75.0L637.4 75.0L636 77.3z" fill="#777"/><path d="M645.9 87.89999999999999v-5.2h2.2l0.9 1.1h3.6v4.1z" fill="none" stroke="#585858" stroke-width="0.8"/><path d="M645.9 97.0v-5.2h2.2l0.9 1.1h3.6v4.1z" fill="none" stroke="#585858" stroke-width="0.8"/><path d="M645.9 106.19999999999999v-5.2h2.2l0.9 1.1h3.6v4.1z" fill="none" stroke="#585858" stroke-width="0.8"/><path d="M639.8000000000001 115.69999999999999v-3.6h7v3.6zM639.8000000000001 112.69999999999999l1-1.8h5l1 1.8M639.8000000000001 113.89999999999999h7" fill="none" stroke="#585858" stroke-width="0.8"/><path d="M640.0000000000001 124.69999999999999v-3.2l3.3-2.2 3.3 2.2v3.2z" fill="none" stroke="#585858" stroke-width="0.8"/><path d="M634.0 121.0L636.8 121.0L635.4 123.3z" fill="#777"/><path d="M645.7 133.7v-3.2l3.3-2.2 3.3 2.2v3.2z" fill="none" stroke="#585858" stroke-width="0.8"/><path d="M645.7 142.9v-3.2l3.3-2.2 3.3 2.2v3.2z" fill="none" stroke="#585858" stroke-width="0.8"/><path d="M645.7 152.1v-3.2l3.3-2.2 3.3 2.2v3.2z" fill="none" stroke="#585858" stroke-width="0.8"/><rect x="640.0000000000001" y="155.7" width="6.8" height="6" rx="0.7" fill="none" stroke="#585858" stroke-width="0.8"/><rect x="640.8000000000001" y="156.5" width="2" height="4.4" fill="#999"/><rect x="643.4000000000001" y="158.89999999999998" width="2.6" height="2" fill="#777"/><rect x="640.0000000000001" y="164.9" width="6.8" height="6" rx="0.7" fill="none" stroke="#585858" stroke-width="0.8"/><path d="M641.0000000000001 169.9l3.6-3.8 1.4 1.4" fill="none" stroke="#585858" stroke-width="0.8"/><circle cx="643.4000000000001" cy="177" r="3.2" fill="none" stroke="#585858" stroke-width="0.8"/><path d="M643.4000000000001 174v6M640.8000000000001 176h2.6" fill="none" stroke="#585858" stroke-width="0.8"/><rect x="640.0000000000001" y="183.1" width="6.8" height="6" rx="0.7" fill="none" stroke="#585858" stroke-width="0.8"/><rect x="641.2" y="184.7" width="3.4" height="3.4" fill="#666"/><path d="M634.0 185.0L636.8 185.0L635.4 187.29999999999998z" fill="#777"/><rect x="645.7" y="192.1" width="6.8" height="6" rx="0.7" fill="none" stroke="#585858" stroke-width="0.8"/><path d="M646.9 193.5h2.4v2.4h-2.4zM649.3 195.9l2.2 1.4" fill="none" stroke="#585858" stroke-width="0.8"/><rect x="645.7" y="201.3" width="6.8" height="6" rx="0.7" fill="none" stroke="#585858" stroke-width="0.8"/><path d="M646.9 202.70000000000002h2.4v2.4h-2.4zM649.3 205.10000000000002l2.2 1.4" fill="none" stroke="#585858" stroke-width="0.8"/><path d="M640.2 211.8l1.6-1.2h4.4v4.8l-1.6 1.2h-4.4zM640.2 211.8h4.4v4.8M644.6 211.8l1.6-1.2" fill="none" stroke="#585858" stroke-width="0.8"/><path d="M634.0 212.3L636.8 212.3L635.4 214.6z" fill="#777"/><path d="M645.9 221.5l1.6-1.2h4.4v4.8l-1.6 1.2h-4.4zM645.9 221.5h4.4v4.8M650.3 221.5l1.6-1.2" fill="none" stroke="#585858" stroke-width="0.8"/><path d="M645.9 230.70000000000002l1.6-1.2h4.4v4.8l-1.6 1.2h-4.4zM645.9 230.70000000000002h4.4v4.8M650.3 230.70000000000002l1.6-1.2" fill="none" stroke="#585858" stroke-width="0.8"/><path d="M640.8000000000001 238.10000000000002h4.8v6.6h-4.8zM640.8000000000001 239.3h4.8M640.8000000000001 240.5h4.8M640.8000000000001 241.70000000000002h4.8M640.8000000000001 242.9h4.8M643.2 239.3v5.4" fill="none" stroke="#666" stroke-width="0.55"/><path d="M634.6 240.20000000000002L637.4 240.20000000000002L636 242.5z" fill="#777"/><path d="M644.9 248.6h7.4v3.6h-7.4zM644.9 250.4h7.4M647.5 248.6v3.6" fill="#ddd" stroke="#666" stroke-width="0.6"/><path d="M640.3000000000001 249.3L643.1 249.3L641.7 251.6z" fill="#777"/><path d="M652.2 256.40000000000003h4.8v6.6h-4.8zM652.2 257.6h4.8M652.2 258.8h4.8M652.2 260.0h4.8M652.2 261.20000000000005h4.8M654.6 257.6v5.4" fill="none" stroke="#666" stroke-width="0.55"/><path d="M652.2 265.5h4.8v6.6h-4.8zM652.2 266.7h4.8M652.2 267.9h4.8M652.2 269.09999999999997h4.8M652.2 270.3h4.8M654.6 266.7v5.4" fill="none" stroke="#666" stroke-width="0.55"/><path d="M652.2 274.7h4.8v6.6h-4.8zM652.2 275.9h4.8M652.2 277.09999999999997h4.8M652.2 278.29999999999995h4.8M652.2 279.5h4.8M654.6 275.9v5.4" fill="none" stroke="#666" stroke-width="0.55"/><path d="M652.2 284.2h4.8v6.6h-4.8zM652.2 285.4h4.8M652.2 286.59999999999997h4.8M652.2 287.79999999999995h4.8M652.2 289.0h4.8M654.6 285.4v5.4" fill="none" stroke="#666" stroke-width="0.55"/><path d="M652.2 293.2h4.8v6.6h-4.8zM652.2 294.4h4.8M652.2 295.59999999999997h4.8M652.2 296.79999999999995h4.8M652.2 298.0h4.8M654.6 294.4v5.4" fill="none" stroke="#666" stroke-width="0.55"/><path d="M652.2 302.2h4.8v6.6h-4.8zM652.2 303.4h4.8M652.2 304.59999999999997h4.8M652.2 305.79999999999995h4.8M652.2 307.0h4.8M654.6 303.4v5.4" fill="none" stroke="#666" stroke-width="0.55"/><path d="M645.5 316.3l1.6-3.4q2-1.2 4 0l1.6 3.4z" fill="#888" stroke="#666" stroke-width="0.5"/><path d="M640 312.8L642.1 314.3L640 315.8z" fill="#777"/><path d="M646.1 326.2h5.8v-2.6h-1.4l-0.6-2.4h-1.8l-0.6 2.4h-1.4z" fill="none" stroke="#585858" stroke-width="0.8"/><path d="M649.0 321.2v-1.4" fill="none" stroke="#585858" stroke-width="0.8"/><path d="M640 321.9L642.1 323.4L640 324.9z" fill="#777"/><rect x="639.8000000000001" y="330" width="7.2" height="6" rx="0.6" fill="none" stroke="#585858" stroke-width="0.8"/><path d="M641.0000000000001 331.4v3.2M642.6 331.8h3M642.6 333.4h3M642.6 334.8h3" fill="none" stroke="#666" stroke-width="0.6"/><path d="M634.0 331.9L636.8 331.9L635.4 334.2z" fill="#777"/><path d="M645.7 342.1l1.8-2.8h3.4l1.8 2.8-1.8 2.8h-3.4z" fill="none" stroke="#585858" stroke-width="0.8"/><path d="M645.7 354.1v-5.6h4.4l2.4 2.4v3.2z" fill="none" stroke="#585858" stroke-width="0.8"/><rect x="645.7" y="357.4" width="6.8" height="6" rx="0.7" fill="none" stroke="#585858" stroke-width="0.8"/><rect x="649.5" y="360.2" width="2.6" height="2.8" fill="#555"/><path d="M646.9 358.4v4" fill="none" stroke="#585858" stroke-width="0.8"/><rect x="645.7" y="366.5" width="6.8" height="6" rx="0.7" fill="none" stroke="#585858" stroke-width="0.8"/><rect x="649.1" y="370.1" width="3" height="2" fill="#555"/><g fill="none" stroke-width="0.75"><rect x="665.2" y="385.6" width="5.4" height="5.4" stroke="#555"/><rect x="677.2" y="385.8" width="5.6" height="5.2" stroke="#b8c4d4"/><path d="M681 384.8l1.6 1.6" stroke="#9ab"/><path d="M691.2 385.6l5 5M696.2 385.6l-5 5" stroke="#e8554e" stroke-width="0.8"/></g><circle cx="670.2" cy="390.6" r="1.6" fill="#3d8ef0"/><path d="M628.2 400.2h3l-1.5 2.5z" fill="#666"/><rect x="626.6" y="407.6" width="3.4" height="4" rx="0.5" fill="none" stroke="#555" stroke-width="0.7"/><rect x="638.4" y="429.4" width="5.6" height="4.6" fill="none" stroke="#666" stroke-width="0.7"/><rect x="638.4" y="429.4" width="5.6" height="1.4" fill="#666"/></svg></body></html>
